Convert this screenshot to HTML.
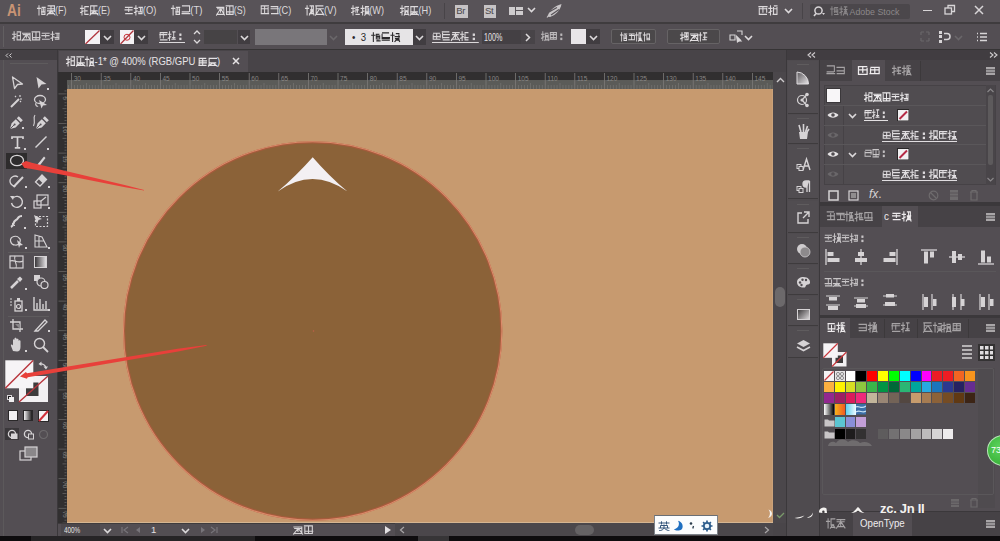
<!DOCTYPE html>
<html><head><meta charset="utf-8">
<style>
*{margin:0;padding:0;box-sizing:border-box}
html,body{width:1000px;height:541px;overflow:hidden;background:#494549;font-family:"Liberation Sans",sans-serif;color:#d8d5d7;position:relative}
.a{position:absolute;display:block}
.t{position:absolute;white-space:nowrap}
.g{display:inline-block;width:1em;height:1em;vertical-align:-0.1em;fill:currentColor;stroke:currentColor;stroke-linecap:square;overflow:visible}
</style></head><body>

<div class="a" style="left:0px;top:0px;width:1000px;height:22px;background:#585358;"></div>
<div class="a" style="left:0px;top:22px;width:1000px;height:1.5px;background:#3f3c3e;"></div>
<div class="t" style="left:6.5px;top:2px;font-size:16px;line-height:17px;color:#c99474;font-weight:bold;letter-spacing:0px;transform:scaleX(0.86);transform-origin:0 0">Ai</div>
<div class="t" data-w="31" id="t2" style="left:37px;top:4.5px;font-size:10.5px;line-height:11.5px;color:#dcd9db;transform:scaleX(0.8611);transform-origin:0 0;"><svg class="g" viewBox="0 0 10 10"><path d="M2.2 0.8 V9.4 M0.5 3.2 H3.8 M5.6 2.2 H9.1 M5.0 6.6 H8.8 M5.2 8.9 H8.4 M5.3 3.7 V8.9 M7.0 2.2 V6.9 M8.8 3.7 V8.9" stroke-width="1.1"/></svg><svg class="g" viewBox="0 0 10 10"><path d="M1.8 0.9 H8.9 M1.2 3.6 H8.9 M1.1 5.6 H8.5 M1.7 8.2 H8.2 M5.0 0.9 V8.2 M8.8 0.9 V6.2 M5.0 5.6 L0.6 9.6 M5.4 5.6 L9.5 9.5" stroke-width="1.1"/></svg>(F)</div>
<div class="t" data-w="31" id="t3" style="left:80px;top:4.5px;font-size:10.5px;line-height:11.5px;color:#dcd9db;transform:scaleX(0.8611);transform-origin:0 0;"><svg class="g" viewBox="0 0 10 10"><path d="M2.2 0.8 V9.4 M0.5 3.2 H3.8 M0.6 7.2 L3.6 5.8 M6.1 1.6 H9.3 M5.1 5.6 H7.9 M5.7 8.9 H9.0 M5.3 1.6 V8.9" stroke-width="1.1"/></svg><svg class="g" viewBox="0 0 10 10"><path d="M2.2 0.9 H8.3 M1.2 5.6 H8.5 M1.1 8.2 H9.2 M5.0 0.9 V8.2 M1.3 0.9 V8.2 M5.0 5.6 L0.6 9.6 M5.4 5.6 L9.5 9.5" stroke-width="1.1"/></svg>(E)</div>
<div class="t" data-w="34" id="t4" style="left:124px;top:4.5px;font-size:10.5px;line-height:11.5px;color:#dcd9db;transform:scaleX(0.8947);transform-origin:0 0;"><svg class="g" viewBox="0 0 10 10"><path d="M1.5 2.2 H8.7 M1.1 4.6 H8.6 M1.8 8.2 H8.8 M5.0 3.7 V6.2" stroke-width="1.1"/></svg><svg class="g" viewBox="0 0 10 10"><path d="M2.2 0.8 V9.4 M0.5 3.2 H3.8 M0.6 7.2 L3.6 5.8 M5.5 2.2 H9.1 M4.8 6.6 H8.4 M5.2 8.2 H8.1 M7.0 2.2 V6.2 M8.8 2.2 V8.2" stroke-width="1.1"/></svg>(O)</div>
<div class="t" data-w="33" id="t5" style="left:171px;top:4.5px;font-size:10.5px;line-height:11.5px;color:#dcd9db;transform:scaleX(0.9167);transform-origin:0 0;"><svg class="g" viewBox="0 0 10 10"><path d="M2.2 0.8 V9.4 M0.5 3.2 H3.8 M5.6 2.2 H9.1 M5.0 6.6 H8.8 M5.2 8.9 H8.4 M5.3 3.7 V8.9 M7.0 2.2 V6.9 M8.8 3.7 V8.9" stroke-width="1.1"/></svg><svg class="g" viewBox="0 0 10 10"><path d="M1.4 0.9 H8.6 M1.2 6.6 H7.9 M1.0 8.2 H9.1 M8.8 0.9 V6.2" stroke-width="1.1"/></svg>(T)</div>
<div class="t" data-w="30.5" id="t6" style="left:215.5px;top:4.5px;font-size:10.5px;line-height:11.5px;color:#dcd9db;transform:scaleX(0.8472);transform-origin:0 0;"><svg class="g" viewBox="0 0 10 10"><path d="M0.9 2.2 H8.1 M1.7 3.6 H8.8 M0.9 8.9 H8.5 M8.8 2.2 V8.9 M5.0 3.7 V6.9 M5.0 3.6 L0.6 9.6 M5.4 3.6 L9.5 9.5" stroke-width="1.1"/></svg><svg class="g" viewBox="0 0 10 10"><path d="M0.9 0.9 H8.1 M2.0 6.6 H9.2 M1.6 8.9 H8.7 M1.3 2.4 V8.9 M5.0 0.9 V8.9 M8.8 0.9 V8.9" stroke-width="1.1"/></svg>(S)</div>
<div class="t" data-w="32.5" id="t7" style="left:260px;top:4.5px;font-size:10.5px;line-height:11.5px;color:#dcd9db;transform:scaleX(0.8784);transform-origin:0 0;"><svg class="g" viewBox="0 0 10 10"><path d="M2.0 0.9 H9.2 M1.9 3.6 H8.6 M1.7 8.2 H9.3 M1.3 0.9 V8.2 M8.8 2.4 V8.2 M5.0 0.9 V8.2" stroke-width="1.1"/></svg><svg class="g" viewBox="0 0 10 10"><path d="M1.6 1.6 H8.7 M1.5 3.6 H9.3 M2.0 8.2 H9.2 M8.8 1.6 V8.2" stroke-width="1.1"/></svg>(C)</div>
<div class="t" data-w="32.5" id="t8" style="left:305px;top:4.5px;font-size:10.5px;line-height:11.5px;color:#dcd9db;transform:scaleX(0.9028);transform-origin:0 0;"><svg class="g" viewBox="0 0 10 10"><path d="M2.2 0.8 V9.4 M0.5 3.2 H3.8 M5.3 0.9 H8.9 M5.8 4.6 H8.0 M4.9 8.2 H9.1 M8.8 0.9 V8.2 M7.0 0.9 V8.2 M7.0 4.6 L4.6 9.6 M7.4 4.6 L9.5 9.5" stroke-width="1.1"/></svg><svg class="g" viewBox="0 0 10 10"><path d="M0.9 0.9 H8.4 M1.8 3.6 H8.9 M2.1 8.9 H8.4 M1.3 0.9 V8.9 M5.0 3.6 L0.6 9.6 M5.4 3.6 L9.5 9.5" stroke-width="1.1"/></svg>(V)</div>
<div class="t" data-w="34" id="t9" style="left:351px;top:4.5px;font-size:10.5px;line-height:11.5px;color:#dcd9db;transform:scaleX(0.8718);transform-origin:0 0;"><svg class="g" viewBox="0 0 10 10"><path d="M2.2 0.8 V9.4 M0.5 3.2 H3.8 M0.6 7.2 L3.6 5.8 M5.7 2.2 H8.2 M6.2 4.6 H8.0 M5.4 8.9 H9.1 M5.3 2.2 V6.9 M7.0 3.7 V6.9" stroke-width="1.1"/></svg><svg class="g" viewBox="0 0 10 10"><path d="M2.2 0.8 V9.4 M0.5 3.2 H3.8 M0.6 7.2 L3.6 5.8 M5.6 1.6 H8.6 M5.0 6.6 H9.2 M5.1 8.2 H9.2 M8.8 3.1 V8.2 M5.3 1.6 V8.2 M7.0 1.6 V6.2 M7.0 6.6 L4.6 9.6 M7.4 6.6 L9.5 9.5" stroke-width="1.1"/></svg>(W)</div>
<div class="t" data-w="32.5" id="t10" style="left:400px;top:4.5px;font-size:10.5px;line-height:11.5px;color:#dcd9db;transform:scaleX(0.8784);transform-origin:0 0;"><svg class="g" viewBox="0 0 10 10"><path d="M2.2 0.8 V9.4 M0.5 3.2 H3.8 M0.6 7.2 L3.6 5.8 M5.6 1.6 H9.2 M5.6 5.6 H8.5 M4.9 8.9 H9.0 M8.8 3.1 V8.9 M5.3 1.6 V8.9 M7.0 5.6 L4.6 9.6 M7.4 5.6 L9.5 9.5" stroke-width="1.1"/></svg><svg class="g" viewBox="0 0 10 10"><path d="M1.2 1.6 H8.6 M1.1 6.6 H8.3 M1.1 8.9 H8.4 M1.3 1.6 V8.9 M5.0 1.6 V8.9 M5.0 6.6 L0.6 9.6 M5.4 6.6 L9.5 9.5" stroke-width="1.1"/></svg>(H)</div>
<div class="a" style="left:444px;top:3px;width:1px;height:16px;background:#484448;"></div>
<div class="a" style="left:455px;top:5px;width:13px;height:12.5px;background:#c6c3c5;"></div>
<div class="t" style="left:456.3px;top:6.2px;font-size:9.5px;line-height:10.5px;color:#4b474b;letter-spacing:-0.3px">Br</div>
<div class="a" style="left:483.5px;top:5px;width:12.5px;height:12.5px;background:#c6c3c5;"></div>
<div class="t" style="left:485px;top:6.2px;font-size:9.5px;line-height:10.5px;color:#4b474b;letter-spacing:-0.3px">St</div>
<div class="a" style="left:509px;top:6.5px;width:6px;height:8.5px;background:#cfccce;"></div>
<div class="a" style="left:516px;top:6.5px;width:6.5px;height:3.6px;background:#cfccce;"></div>
<div class="a" style="left:516px;top:11.2px;width:6.5px;height:3.8px;background:#cfccce;"></div>
<svg class="a" style="left:527px;top:7px;" width="9" height="6" viewBox="0 0 9 6"><path d="M1 1 L4.5 4.5 L8 1" stroke="#dcd9db" stroke-width="1.6" fill="none"/></svg>
<svg class="a" style="left:546px;top:3px;" width="17" height="15" viewBox="0 0 17 15"><path d="M1.5 13.5 C3 8 8 3 15.5 1 C14.5 7 10 12 4 14 Z" fill="#c9c6c8"/><path d="M3 9 L11 4.5 M5 12 L13 6.5" stroke="#585358" stroke-width="1.2"/><path d="M1 14.5 L3 12" stroke="#c9c6c8" stroke-width="1.2"/></svg>
<div class="t" data-w="19.7" id="t13" style="left:758px;top:4.5px;font-size:10.5px;line-height:11.5px;color:#dcd9db;transform:scaleX(0.9381);transform-origin:0 0;"><svg class="g" viewBox="0 0 10 10"><path d="M0.9 1.6 H9.2 M1.6 3.6 H8.8 M1.5 8.9 H8.6 M1.3 3.1 V8.9 M8.8 3.1 V6.9 M5.0 1.6 V6.9" stroke-width="1.1"/></svg><svg class="g" viewBox="0 0 10 10"><path d="M2.2 0.8 V9.4 M0.5 3.2 H3.8 M0.6 7.2 L3.6 5.8 M6.1 0.9 H8.8 M5.8 3.6 H8.1 M4.9 8.9 H8.1 M5.3 2.4 V8.9 M8.8 2.4 V8.9" stroke-width="1.1"/></svg></div>
<svg class="a" style="left:784px;top:8px;" width="9" height="6" viewBox="0 0 9 6"><path d="M1 1 L4.5 4.5 L8 1" stroke="#dcd9db" stroke-width="1.6" fill="none"/></svg>
<div class="a" style="left:802px;top:3px;width:1px;height:16px;background:#484448;"></div>
<div class="a" style="left:810px;top:4px;width:100px;height:14.5px;background:#4b474b;border-radius:2px"></div>
<svg class="a" style="left:813px;top:5px;" width="14" height="13" viewBox="0 0 14 13"><circle cx="5.5" cy="5.5" r="3.6" stroke="#d8d5d7" stroke-width="1.5" fill="none"/><path d="M3 8.5 L1 11" stroke="#d8d5d7" stroke-width="1.6"/><path d="M9 8 L12 8 L10.5 10 Z" fill="#d8d5d7"/></svg>
<div class="t" data-w="75" id="t14" style="left:830px;top:5.5px;font-size:9.5px;line-height:10.5px;color:#8b888a;transform:scaleX(0.9259);transform-origin:0 0;font-family:"Liberation Mono",monospace"><svg class="g" viewBox="0 0 10 10"><path d="M2.2 0.8 V9.4 M0.5 3.2 H3.8 M5.2 1.6 H8.7 M4.8 5.6 H8.1 M5.2 8.9 H9.2 M5.3 1.6 V6.9 M7.0 1.6 V6.9 M8.8 3.1 V8.9" stroke-width="1.1"/></svg><svg class="g" viewBox="0 0 10 10"><path d="M2.2 0.8 V9.4 M0.5 3.2 H3.8 M0.6 7.2 L3.6 5.8 M5.8 0.9 H8.6 M5.6 3.6 H8.8 M5.3 8.2 H8.5 M7.0 0.9 V8.2 M7.0 3.6 L4.6 9.6 M7.4 3.6 L9.5 9.5" stroke-width="1.1"/></svg> Adobe Stock</div>
<div class="a" style="left:923px;top:9.5px;width:9px;height:1.8px;background:#d8d5d7;"></div>
<svg class="a" style="left:944px;top:4px;" width="12" height="12" viewBox="0 0 12 12"><rect x="1" y="4" width="6.5" height="6" stroke="#d8d5d7" stroke-width="1.3" fill="none"/><path d="M4 4 V1.5 H10.5 V7.5 H7.5" stroke="#d8d5d7" stroke-width="1.3" fill="none"/></svg>
<svg class="a" style="left:974px;top:5px;" width="10" height="10" viewBox="0 0 10 10"><path d="M1 1 L9 9 M9 1 L1 9" stroke="#d8d5d7" stroke-width="1.5"/></svg>
<div class="a" style="left:0px;top:23.5px;width:1000px;height:25.5px;background:#534e53;"></div>
<div class="a" style="left:0px;top:49px;width:1000px;height:1px;background:#363435;"></div>
<div class="a" style="left:2.5px;top:26px;width:1px;height:21px;background:#625f61;"></div>
<div class="t" data-w="48" id="t15" style="left:11.7px;top:31px;font-size:10px;line-height:11px;color:#cfccce;transform:scaleX(0.9600);transform-origin:0 0;"><svg class="g" viewBox="0 0 10 10"><path d="M2.2 0.8 V9.4 M0.5 3.2 H3.8 M0.6 7.2 L3.6 5.8 M5.5 0.9 H9.1 M5.6 4.6 H8.7 M6.1 8.9 H9.0 M5.3 2.4 V8.9 M8.8 0.9 V8.9" stroke-width="1.1"/></svg><svg class="g" viewBox="0 0 10 10"><path d="M0.9 2.2 H8.1 M1.7 3.6 H8.8 M0.9 8.9 H8.5 M8.8 2.2 V8.9 M5.0 3.7 V6.9 M5.0 3.6 L0.6 9.6 M5.4 3.6 L9.5 9.5" stroke-width="1.1"/></svg><svg class="g" viewBox="0 0 10 10"><path d="M0.9 0.9 H8.1 M2.0 6.6 H9.2 M1.6 8.9 H8.7 M1.3 2.4 V8.9 M5.0 0.9 V8.9 M8.8 0.9 V8.9" stroke-width="1.1"/></svg><svg class="g" viewBox="0 0 10 10"><path d="M1.5 2.2 H8.7 M1.1 4.6 H8.6 M1.8 8.2 H8.8 M5.0 3.7 V6.2" stroke-width="1.1"/></svg><svg class="g" viewBox="0 0 10 10"><path d="M2.2 0.8 V9.4 M0.5 3.2 H3.8 M0.6 7.2 L3.6 5.8 M5.5 2.2 H9.1 M4.8 6.6 H8.4 M5.2 8.2 H8.1 M7.0 2.2 V6.2 M8.8 2.2 V8.2" stroke-width="1.1"/></svg></div>
<svg class="a" style="left:85px;top:29.5px;" width="15" height="14.5" viewBox="0 0 15 14.5"><rect x="0" y="0" width="15" height="14.5" fill="#f4f2f4"/><path d="M0.5 14.0 L14.5 0.5" stroke="#b0343c" stroke-width="1.3"/></svg>
<div class="a" style="left:100px;top:29.5px;width:14px;height:14.5px;background:#413d41;"></div>
<svg class="a" style="left:102.5px;top:35px;" width="9" height="6" viewBox="0 0 9 6"><path d="M1 1 L4.5 4.5 L8 1" stroke="#dcd9db" stroke-width="1.6" fill="none"/></svg>
<svg class="a" style="left:120px;top:29.5px;" width="14" height="14.5" viewBox="0 0 14 14.5"><rect x="0" y="0" width="14" height="14.5" fill="#f4f2f4"/><path d="M0.5 14.0 L13.5 0.5" stroke="#b0343c" stroke-width="1.3"/><circle cx="7.0" cy="7.25" r="3" stroke="#c8363c" stroke-width="1" fill="none"/></svg>
<div class="a" style="left:134px;top:29.5px;width:14px;height:14.5px;background:#413d41;"></div>
<svg class="a" style="left:136.5px;top:35px;" width="9" height="6" viewBox="0 0 9 6"><path d="M1 1 L4.5 4.5 L8 1" stroke="#dcd9db" stroke-width="1.6" fill="none"/></svg>
<div class="t" data-w="26" id="t16" style="left:159px;top:31px;font-size:10px;line-height:11px;color:#dcd9db;transform:scaleX(0.8667);transform-origin:0 0;border-bottom:1px solid currentColor;line-height:11px"><svg class="g" viewBox="0 0 10 10"><path d="M1.7 1.6 H9.3 M0.9 3.6 H8.8 M1.6 8.9 H9.3 M5.0 3.1 V6.9 M1.3 1.6 V6.9" stroke-width="1.1"/></svg><svg class="g" viewBox="0 0 10 10"><path d="M2.2 0.8 V9.4 M0.5 3.2 H3.8 M0.6 7.2 L3.6 5.8 M5.9 0.9 H8.5 M5.7 6.6 H8.4 M4.8 8.2 H8.8 M7.0 0.9 V8.2" stroke-width="1.1"/></svg><svg class="g" viewBox="0 0 10 10"><rect x="4" y="3" width="1.4" height="1.4"/><rect x="4" y="7.2" width="1.4" height="1.4"/></svg></div>
<svg class="a" style="left:193px;top:29px;" width="8" height="16" viewBox="0 0 8 16"><path d="M1 5 L4 2 L7 5 M1 11 L4 14 L7 11" stroke="#dcd9db" stroke-width="1.3" fill="none"/></svg>
<div class="a" style="left:204px;top:29.5px;width:33px;height:14.5px;background:#464345;"></div>
<div class="a" style="left:238px;top:29.5px;width:12px;height:14.5px;background:#413d41;"></div>
<svg class="a" style="left:239.5px;top:35px;" width="9" height="6" viewBox="0 0 9 6"><path d="M1 1 L4.5 4.5 L8 1" stroke="#dcd9db" stroke-width="1.6" fill="none"/></svg>
<div class="a" style="left:255px;top:28.5px;width:72px;height:16.5px;background:#79767a;"></div>
<svg class="a" style="left:329px;top:35px;" width="9" height="6" viewBox="0 0 9 6"><path d="M1 1 L4.5 4.5 L8 1" stroke="#6a676a" stroke-width="1.6" fill="none"/></svg>
<div class="a" style="left:345px;top:28.5px;width:67.5px;height:16.5px;background:#e6e4e6;"></div>
<div class="t" data-w="50" id="t17" style="left:352px;top:31.5px;font-size:10px;line-height:11px;color:#2a282a;transform:scaleX(0.9615);transform-origin:0 0;">•&nbsp;&nbsp;3&nbsp;&nbsp;<svg class="g" viewBox="0 0 10 10"><path d="M2.2 0.8 V9.4 M0.5 3.2 H3.8 M5.5 2.2 H8.0 M6.2 4.6 H8.5 M5.8 8.9 H9.2 M5.3 2.2 V6.9 M7.0 2.2 V8.9 M8.8 3.7 V6.9" stroke-width="1.1"/></svg><svg class="g" viewBox="0 0 10 10"><path d="M1.8 0.9 H8.0 M1.3 5.6 H9.0 M1.3 6.6 H8.8 M1.4 8.2 H8.8 M1.3 2.4 V6.2" stroke-width="1.1"/></svg><svg class="g" viewBox="0 0 10 10"><path d="M2.2 0.8 V9.4 M0.5 3.2 H3.8 M6.1 1.6 H8.8 M4.9 4.6 H9.3 M5.2 6.6 H8.8 M5.6 8.2 H9.1 M8.8 3.1 V8.2 M7.0 6.6 L4.6 9.6 M7.4 6.6 L9.5 9.5" stroke-width="1.1"/></svg></div>
<div class="a" style="left:412.5px;top:28.5px;width:13px;height:16.5px;background:#413d41;"></div>
<svg class="a" style="left:414.5px;top:35px;" width="9" height="6" viewBox="0 0 9 6"><path d="M1 1 L4.5 4.5 L8 1" stroke="#dcd9db" stroke-width="1.6" fill="none"/></svg>
<div class="t" data-w="46.8" id="t18" style="left:432px;top:31px;font-size:10px;line-height:11px;color:#dcd9db;transform:scaleX(0.9360);transform-origin:0 0;border-bottom:1px solid currentColor;line-height:11px"><svg class="g" viewBox="0 0 10 10"><path d="M1.6 2.2 H8.1 M1.7 5.6 H8.3 M1.9 8.2 H8.5 M8.8 3.7 V6.2 M5.0 2.2 V8.2 M1.3 3.7 V8.2" stroke-width="1.1"/></svg><svg class="g" viewBox="0 0 10 10"><path d="M1.0 0.9 H8.0 M2.1 3.6 H8.6 M1.9 6.6 H8.0 M2.0 8.9 H8.4 M1.3 2.4 V6.9" stroke-width="1.1"/></svg><svg class="g" viewBox="0 0 10 10"><path d="M2.1 1.6 H9.1 M1.8 3.6 H8.0 M0.9 8.2 H9.1 M5.0 1.6 V8.2 M5.0 3.6 L0.6 9.6 M5.4 3.6 L9.5 9.5" stroke-width="1.1"/></svg><svg class="g" viewBox="0 0 10 10"><path d="M2.2 0.8 V9.4 M0.5 3.2 H3.8 M0.6 7.2 L3.6 5.8 M5.3 1.6 H8.4 M4.9 6.6 H8.5 M6.2 8.9 H8.4 M5.3 3.1 V8.9" stroke-width="1.1"/></svg><svg class="g" viewBox="0 0 10 10"><rect x="4" y="3" width="1.4" height="1.4"/><rect x="4" y="7.2" width="1.4" height="1.4"/></svg></div>
<div class="a" style="left:481.5px;top:29.5px;width:39.5px;height:14.5px;background:#444044;"></div>
<div class="t" data-w="19.4" id="t19" style="left:484px;top:31.5px;font-size:10px;line-height:11px;color:#e6e3e5;transform:scaleX(0.7185);transform-origin:0 0;">100%</div>
<div class="a" style="left:521px;top:29.5px;width:14px;height:14.5px;background:#484448;"></div>
<svg class="a" style="left:525px;top:33px;" width="6" height="9" viewBox="0 0 6 9"><path d="M1 1 L4.5 4.5 L1 8" stroke="#dcd9db" stroke-width="1.5" fill="none"/></svg>
<div class="t" data-w="24.7" id="t20" style="left:541px;top:31px;font-size:10px;line-height:11px;color:#bdbabc;transform:scaleX(0.8233);transform-origin:0 0;"><svg class="g" viewBox="0 0 10 10"><path d="M2.2 0.8 V9.4 M0.5 3.2 H3.8 M0.6 7.2 L3.6 5.8 M5.2 2.2 H8.4 M6.2 4.6 H8.6 M5.6 8.9 H8.4 M8.8 3.7 V8.9 M5.3 3.7 V6.9 M7.0 4.6 L4.6 9.6 M7.4 4.6 L9.5 9.5" stroke-width="1.1"/></svg><svg class="g" viewBox="0 0 10 10"><path d="M1.9 1.6 H8.0 M1.6 3.6 H8.5 M1.2 6.6 H8.4 M0.8 8.2 H8.3 M8.8 1.6 V8.2 M5.0 1.6 V8.2 M1.3 1.6 V8.2" stroke-width="1.1"/></svg><svg class="g" viewBox="0 0 10 10"><rect x="4" y="3" width="1.4" height="1.4"/><rect x="4" y="7.2" width="1.4" height="1.4"/></svg></div>
<div class="a" style="left:571px;top:29px;width:15px;height:15px;background:#e8e5e8;"></div>
<div class="a" style="left:586px;top:29px;width:14px;height:15px;background:#413d41;"></div>
<svg class="a" style="left:588.5px;top:35px;" width="9" height="6" viewBox="0 0 9 6"><path d="M1 1 L4.5 4.5 L8 1" stroke="#dcd9db" stroke-width="1.6" fill="none"/></svg>
<div class="a" style="left:611px;top:29px;width:45px;height:15px;background:#4b484a;border:1px solid #666365;border-radius:2px"></div>
<div class="t" data-w="30" id="t21" style="left:620px;top:31.5px;font-size:9.5px;line-height:10.5px;color:#e3e0e2;transform:scaleX(0.7895);transform-origin:0 0;"><svg class="g" viewBox="0 0 10 10"><path d="M2.2 0.8 V9.4 M0.5 3.2 H3.8 M5.6 2.2 H9.1 M5.0 6.6 H8.8 M5.2 8.9 H8.4 M5.3 3.7 V8.9 M7.0 2.2 V6.9 M8.8 3.7 V8.9" stroke-width="1.1"/></svg><svg class="g" viewBox="0 0 10 10"><path d="M1.7 2.2 H8.5 M2.1 3.6 H8.3 M1.0 8.2 H8.1 M8.8 3.7 V8.2 M5.0 2.2 V8.2" stroke-width="1.1"/></svg><svg class="g" viewBox="0 0 10 10"><path d="M2.2 0.8 V9.4 M0.5 3.2 H3.8 M5.4 0.9 H8.3 M5.1 6.6 H8.1 M4.8 8.9 H9.2 M5.3 0.9 V8.9 M7.0 0.9 V8.9 M7.0 6.6 L4.6 9.6 M7.4 6.6 L9.5 9.5" stroke-width="1.1"/></svg><svg class="g" viewBox="0 0 10 10"><path d="M2.2 0.8 V9.4 M0.5 3.2 H3.8 M6.2 2.2 H8.9 M5.5 6.6 H8.8 M5.3 8.2 H9.1 M8.8 2.2 V8.2 M5.3 2.2 V8.2" stroke-width="1.1"/></svg></div>
<div class="a" style="left:667px;top:29px;width:52.5px;height:15px;background:#4b484a;border:1px solid #666365;border-radius:2px"></div>
<div class="t" data-w="27.5" id="t22" style="left:680.3px;top:31.5px;font-size:9.5px;line-height:10.5px;color:#e3e0e2;transform:scaleX(0.9649);transform-origin:0 0;"><svg class="g" viewBox="0 0 10 10"><path d="M2.2 0.8 V9.4 M0.5 3.2 H3.8 M0.6 7.2 L3.6 5.8 M5.0 0.9 H9.0 M5.0 4.6 H8.7 M5.5 8.2 H8.7 M5.3 2.4 V6.2 M7.0 0.9 V6.2 M8.8 0.9 V8.2" stroke-width="1.1"/></svg><svg class="g" viewBox="0 0 10 10"><path d="M0.9 2.2 H8.1 M1.7 3.6 H8.8 M0.9 8.9 H8.5 M8.8 2.2 V8.9 M5.0 3.7 V6.9 M5.0 3.6 L0.6 9.6 M5.4 3.6 L9.5 9.5" stroke-width="1.1"/></svg><svg class="g" viewBox="0 0 10 10"><path d="M2.2 0.8 V9.4 M0.5 3.2 H3.8 M5.6 0.9 H9.1 M5.7 5.6 H9.2 M4.8 8.2 H8.7 M7.0 0.9 V8.2" stroke-width="1.1"/></svg></div>
<svg class="a" style="left:729px;top:29px;" width="14" height="16" viewBox="0 0 14 16"><path d="M1 6 H6 V11 H1 Z M8 2 H13 V6 M8 8 L12 12 L9 12 Z" stroke="#d8d5d7" stroke-width="1.1" fill="none"/><path d="M7 6 L12 11 L8 14 Z" fill="#d8d5d7"/></svg>
<svg class="a" style="left:744px;top:35px;" width="9" height="6" viewBox="0 0 9 6"><path d="M1 1 L4.5 4.5 L8 1" stroke="#dcd9db" stroke-width="1.6" fill="none"/></svg>
<svg class="a" style="left:920px;top:31px;" width="10" height="11" viewBox="0 0 10 11"><path d="M1 1 H4 M6 1 H9 M1 10 H4 M6 10 H9 M1 1 V4 M9 1 V4 M1 7 V10 M9 7 V10" stroke="#6a676a" stroke-width="1.2" fill="none"/></svg>
<div class="a" style="left:939px;top:30.5px;width:3px;height:3px;background:#d8d5d7;"></div>
<div class="a" style="left:939px;top:35px;width:3px;height:3px;background:#d8d5d7;"></div>
<div class="a" style="left:939px;top:39.5px;width:3px;height:3px;background:#d8d5d7;"></div>
<svg class="a" style="left:943px;top:31px;" width="9" height="11" viewBox="0 0 9 11"><path d="M1 2.5 H4 A3 3 0 0 1 4 8.5 H1" stroke="#d8d5d7" stroke-width="1.5" fill="none"/></svg>
<svg class="a" style="left:954px;top:35px;" width="9" height="6" viewBox="0 0 9 6"><path d="M1 1 L4.5 4.5 L8 1" stroke="#6a676a" stroke-width="1.6" fill="none"/></svg>
<svg class="a" style="left:976px;top:32px;" width="12" height="10" viewBox="0 0 12 10"><path d="M1 1.5 H2 M4 1.5 H11 M1 5 H2 M4 5 H11 M1 8.5 H2 M4 8.5 H11" stroke="#d8d5d7" stroke-width="1.4"/></svg>
<div class="a" style="left:0px;top:50px;width:57px;height:486px;background:#534e53;"></div>
<div class="a" style="left:0px;top:50px;width:57px;height:10px;background:#444044;"></div>
<div class="a" style="left:57px;top:50px;width:1px;height:486px;background:#3b383b;"></div>
<div class="a" style="left:3px;top:60px;width:1px;height:476px;background:#5c595b;"></div>
<svg class="a" style="left:5px;top:53px;" width="7" height="5" viewBox="0 0 7 5"><path d="M3 0.5 L1 2.5 L3 4.5 M6.5 0.5 L4.5 2.5 L6.5 4.5" stroke="#cfccce" stroke-width="1" fill="none"/></svg>
<div class="a" style="left:10px;top:63px;width:38px;height:1px;background:#5e5b5d;"></div>
<svg class="a" style="left:11px;top:76px;" width="13" height="14" viewBox="0 0 13 14"><path d="M1.5 1 L11.5 8 L6.5 8.5 L3.5 12.5 Z" stroke="#d6d3d5" stroke-width="1.3" fill="none" stroke-linejoin="round"/></svg>
<svg class="a" style="left:35px;top:76px;" width="13" height="14" viewBox="0 0 13 14"><path d="M1.5 1 L11.5 8 L6.5 8.5 L3.5 12.5 Z" fill="#d6d3d5"/></svg>
<div class="a" style="left:47px;top:88px;width:2px;height:2px;background:#d6d3d5;"></div>
<svg class="a" style="left:9px;top:94px;" width="15" height="14" viewBox="0 0 15 14"><path d="M2 13 L10 5" stroke="#d6d3d5" stroke-width="2"/><path d="M6 2 L7 3 M11 1 V3 M13 5 H11 M12 8 L11 7" stroke="#d6d3d5" stroke-width="1.2"/></svg>
<svg class="a" style="left:33px;top:94px;" width="16" height="15" viewBox="0 0 16 15"><ellipse cx="7" cy="5.5" rx="5.5" ry="4" stroke="#d6d3d5" stroke-width="1.3" fill="none"/><path d="M6 6 L14 11 L10 11.5 L8.5 14.5 Z" fill="#d6d3d5"/><path d="M3 9 C2 11 4 13 5 12" stroke="#d6d3d5" stroke-width="1.2" fill="none"/></svg>
<svg class="a" style="left:9px;top:115px;" width="15" height="15" viewBox="0 0 15 15"><path d="M1 14 L2.6 8.3 L6.8 4.2 L10.8 8.2 L6.7 12.4 Z" fill="#d6d3d5"/><path d="M7.8 3.2 L9.8 1.2 L13.8 5.2 L11.8 7.2 Z" fill="#d6d3d5"/><path d="M1.2 13.8 L5 10" stroke="#534e53" stroke-width="0.9"/><circle cx="5.6" cy="9.4" r="1" fill="#534e53"/></svg>
<div class="a" style="left:22px;top:127px;width:2px;height:2px;background:#d6d3d5;"></div>
<svg class="a" style="left:32px;top:114px;" width="17" height="16" viewBox="0 0 17 16"><path d="M4 15 L5.6 9.3 L9.8 5.2 L13.8 9.2 L9.7 13.4 Z" fill="#d6d3d5"/><path d="M10.8 4.2 L12.8 2.2 L16.8 6.2 L14.8 8.2 Z" fill="#d6d3d5"/><path d="M4.2 14.8 L8 11" stroke="#534e53" stroke-width="0.9"/><circle cx="8.6" cy="10.4" r="1" fill="#534e53"/><path d="M3 1 C0.5 4 4 7 1.5 12" stroke="#d6d3d5" stroke-width="1.1" fill="none"/></svg>
<svg class="a" style="left:10.5px;top:136px;" width="13" height="13" viewBox="0 0 13 13"><path d="M1 3 V1 H12 V3 M6.5 1 V11.8 M3.8 11.8 H9.2" stroke="#d6d3d5" stroke-width="1.7" fill="none"/></svg>
<div class="a" style="left:24px;top:148px;width:2px;height:2px;background:#d6d3d5;"></div>
<svg class="a" style="left:34px;top:135px;" width="14" height="14" viewBox="0 0 14 14"><path d="M1.5 12.5 L12.5 1.5" stroke="#d6d3d5" stroke-width="1.4"/></svg>
<div class="a" style="left:47px;top:148px;width:2px;height:2px;background:#d6d3d5;"></div>
<div class="a" style="left:6px;top:152.7px;width:21px;height:16px;background:#2e2c2d;"></div>
<svg class="a" style="left:9px;top:154px;" width="16" height="13" viewBox="0 0 16 13"><ellipse cx="8" cy="6.5" rx="6.5" ry="5.2" stroke="#d6d3d5" stroke-width="1.3" fill="none"/></svg>
<svg class="a" style="left:34px;top:155px;" width="13" height="14" viewBox="0 0 13 14"><path d="M3 10 L10 1.5 L11.5 3 L5 11.5 Z" fill="#d6d3d5"/><path d="M2 13 L4 10.5" stroke="#d6d3d5" stroke-width="2"/></svg>
<div class="a" style="left:47px;top:168px;width:2px;height:2px;background:#d6d3d5;"></div>
<svg class="a" style="left:9px;top:173px;" width="16" height="15" viewBox="0 0 16 15"><path d="M6.5 13 A5 5 0 1 1 9 4" stroke="#d6d3d5" stroke-width="1.3" fill="none"/><path d="M4.5 14 L14 4" stroke="#d6d3d5" stroke-width="2"/></svg>
<div class="a" style="left:25px;top:186px;width:2px;height:2px;background:#d6d3d5;"></div>
<svg class="a" style="left:34px;top:173px;" width="14" height="14" viewBox="0 0 14 14"><path d="M1.5 9 L8 2 L12.5 6.5 L6 13 Z" stroke="#d6d3d5" stroke-width="1.3" fill="none"/><path d="M4.5 6 L9 10.5 L12.5 6.5 L8 2 Z" fill="#d6d3d5"/></svg>
<div class="a" style="left:48px;top:186px;width:2px;height:2px;background:#d6d3d5;"></div>
<svg class="a" style="left:9px;top:194px;" width="15" height="15" viewBox="0 0 15 15"><path d="M4 4 A5.5 5.5 0 1 1 2.5 9" stroke="#d6d3d5" stroke-width="1.4" fill="none"/><path d="M1 2 L5 2 L4 6 Z" fill="#d6d3d5"/></svg>
<div class="a" style="left:24px;top:207px;width:2px;height:2px;background:#d6d3d5;"></div>
<svg class="a" style="left:33px;top:194px;" width="16" height="15" viewBox="0 0 16 15"><rect x="1" y="7" width="7" height="7" stroke="#d6d3d5" stroke-width="1.2" fill="none"/><rect x="4" y="1" width="11" height="10" stroke="#d6d3d5" stroke-width="1.2" fill="none"/><path d="M8 7 L13 3" stroke="#d6d3d5" stroke-width="1.2"/></svg>
<div class="a" style="left:48px;top:207px;width:2px;height:2px;background:#d6d3d5;"></div>
<svg class="a" style="left:9px;top:214px;" width="16" height="15" viewBox="0 0 16 15"><path d="M2 13 C6 11 3 8 7 6 C10 5 8 2 13 2" stroke="#d6d3d5" stroke-width="2.2" fill="none"/><path d="M3 9 L6 12" stroke="#d6d3d5" stroke-width="1"/></svg>
<div class="a" style="left:24px;top:227px;width:2px;height:2px;background:#d6d3d5;"></div>
<svg class="a" style="left:33px;top:214px;" width="16" height="15" viewBox="0 0 16 15"><rect x="2.5" y="2.5" width="12" height="10" stroke="#d6d3d5" stroke-width="1.2" fill="none" stroke-dasharray="2 1.5"/><path d="M1 1 L9 5 L5.5 6 L4 10 Z" fill="#d6d3d5"/></svg>
<svg class="a" style="left:9px;top:234px;" width="16" height="15" viewBox="0 0 16 15"><path d="M1.5 7 C1 2 8 1 10 4 C13 6 10 12 6 11 C3 11 2 9 1.5 7 Z" stroke="#d6d3d5" stroke-width="1.2" fill="none"/><path d="M8 6 L14 11 L11 11.5 L10 14 Z" fill="#d6d3d5"/></svg>
<div class="a" style="left:25px;top:247px;width:2px;height:2px;background:#d6d3d5;"></div>
<svg class="a" style="left:33px;top:233px;" width="16" height="16" viewBox="0 0 16 16"><path d="M2 2 L9 4 L14 14 L2 14 Z M2 8 H11 M6 3 L6 14" stroke="#d6d3d5" stroke-width="1.1" fill="none"/></svg>
<div class="a" style="left:48px;top:247px;width:2px;height:2px;background:#d6d3d5;"></div>
<div class="a" style="left:8px;top:252px;width:41px;height:1px;background:#5e5b5d;"></div>
<svg class="a" style="left:9px;top:255px;" width="15" height="14" viewBox="0 0 15 14"><rect x="1" y="1" width="13" height="12" stroke="#d6d3d5" stroke-width="1.2" fill="none"/><path d="M1 6 C5 4 9 9 14 6 M6 1 C4 5 9 9 7 13" stroke="#d6d3d5" stroke-width="1.1" fill="none"/></svg>
<div class="a" style="left:34px;top:256px;width:13px;height:12px;border:1px solid #d6d3d5;background:linear-gradient(90deg,#3b383b,#e0dde0)"></div>
<svg class="a" style="left:9px;top:275px;" width="15" height="15" viewBox="0 0 15 15"><path d="M2 13 L9 6" stroke="#d6d3d5" stroke-width="2.5"/><path d="M8 4 L11 1.5 L13.5 4 L11 7 Z" fill="#d6d3d5"/></svg>
<div class="a" style="left:25px;top:288px;width:2px;height:2px;background:#d6d3d5;"></div>
<svg class="a" style="left:33px;top:274px;" width="16" height="15" viewBox="0 0 16 15"><rect x="1" y="1" width="6" height="6" fill="#d6d3d5"/><circle cx="8" cy="8" r="4" stroke="#d6d3d5" stroke-width="1.2" fill="#534e53"/><circle cx="11.5" cy="11" r="3.5" stroke="#d6d3d5" stroke-width="1.2" fill="#534e53"/></svg>
<svg class="a" style="left:9px;top:297px;" width="16" height="15" viewBox="0 0 16 15"><rect x="6" y="4" width="7" height="10" stroke="#d6d3d5" stroke-width="1.3" fill="none"/><circle cx="9.5" cy="9.5" r="2" stroke="#d6d3d5" stroke-width="1.2" fill="none"/><rect x="8" y="1" width="3" height="3" fill="#d6d3d5"/><path d="M1 2 H3 M1 5 H3 M1 8 H3" stroke="#d6d3d5" stroke-width="1.2"/></svg>
<div class="a" style="left:25px;top:309px;width:2px;height:2px;background:#d6d3d5;"></div>
<svg class="a" style="left:33px;top:296px;" width="16" height="15" viewBox="0 0 16 15"><path d="M1 1 V14 H15 M4 13 V7 M7 13 V3 M10 13 V8 M13 13 V5" stroke="#d6d3d5" stroke-width="1.4" fill="none"/></svg>
<div class="a" style="left:48px;top:309px;width:2px;height:2px;background:#d6d3d5;"></div>
<div class="a" style="left:8px;top:316px;width:41px;height:1px;background:#5e5b5d;"></div>
<svg class="a" style="left:9px;top:318px;" width="16" height="15" viewBox="0 0 16 15"><path d="M4 1 V11 H14 M1 4 H11 V14" stroke="#d6d3d5" stroke-width="1.3" fill="none"/><path d="M6 6 L11 6 L11 11 Z" fill="#8a878a"/></svg>
<svg class="a" style="left:33px;top:318px;" width="16" height="15" viewBox="0 0 16 15"><path d="M2 13 L12 2 L14 4 L5 13 Z" stroke="#d6d3d5" stroke-width="1.3" fill="none"/></svg>
<div class="a" style="left:48px;top:330px;width:2px;height:2px;background:#d6d3d5;"></div>
<svg class="a" style="left:9px;top:337px;" width="16" height="16" viewBox="0 0 16 16"><path d="M4 14 L2 9 C1.5 7.5 3 7 4 8.5 V3 C4 2 5.5 2 5.5 3 V7 V1.5 C5.5 0.5 7.5 0.5 7.5 1.5 V7 V2.5 C7.5 1.5 9.5 1.5 9.5 2.5 V7.5 V4 C9.5 3 11.5 3 11.5 4 V10 C11.5 13 10 14.5 8 14.5 Z" fill="#d6d3d5"/></svg>
<div class="a" style="left:25px;top:350px;width:2px;height:2px;background:#d6d3d5;"></div>
<svg class="a" style="left:33px;top:337px;" width="16" height="16" viewBox="0 0 16 16"><circle cx="6.5" cy="6.5" r="5" stroke="#d6d3d5" stroke-width="1.4" fill="none"/><path d="M10 10 L15 15" stroke="#d6d3d5" stroke-width="1.8"/></svg>
<svg class="a" style="left:5px;top:360px" width="45" height="44" viewBox="0 0 45 44">
<rect x="14" y="16" width="29" height="26" fill="#f2f0f2"/>
<rect x="21" y="22.5" width="12.5" height="13.5" fill="#3d3b3c"/>
<path d="M14 42 L43 16" stroke="#b8343c" stroke-width="1.4"/>
<rect x="0.3" y="0.3" width="28" height="28" fill="#f6f4f6"/>
<path d="M0.3 28.3 L28.3 0.3" stroke="#b8343c" stroke-width="1.4"/>
</svg>
<svg class="a" style="left:38px;top:360px;" width="11" height="10" viewBox="0 0 11 10"><path d="M2 4 A5 5 0 0 1 8 8" stroke="#d6d3d5" stroke-width="1.2" fill="none"/><path d="M0.5 4 L3.5 1.5 L3.5 6 Z M8 9.5 L5.5 6.5 L10 6.5 Z" fill="#d6d3d5"/></svg>
<div class="a" style="left:6.5px;top:395px;width:5px;height:5px;background:#1e1c1d;border:1px solid #d6d3d5"></div>
<div class="a" style="left:9px;top:397px;width:5px;height:5px;background:#f0eef0;"></div>
<div class="a" style="left:7.5px;top:410px;width:10.5px;height:11px;background:#f2f0f2;border:1px solid #2a2829"></div>
<div class="a" style="left:22.5px;top:410px;width:10.5px;height:11px;border:1px solid #2a2829;background:linear-gradient(90deg,#f4f2f4,#1c1a1b)"></div>
<svg class="a" style="left:38px;top:409.5px;" width="11" height="12" viewBox="0 0 11 12"><rect x="0.5" y="0.5" width="10" height="11" fill="#f4f2f4" stroke="#2a2829"/><path d="M1 11 L10 1" stroke="#d0303a" stroke-width="2"/></svg>
<div class="a" style="left:5.3px;top:428px;width:14px;height:12px;background:#3b383b;"></div>
<svg class="a" style="left:7px;top:429px;" width="12" height="11" viewBox="0 0 12 11"><circle cx="5" cy="5" r="3.6" stroke="#d6d3d5" stroke-width="1.3" fill="none"/><rect x="4" y="4.5" width="6.5" height="5.5" fill="#d6d3d5"/></svg>
<svg class="a" style="left:23px;top:429px;" width="12" height="11" viewBox="0 0 12 11"><circle cx="5" cy="5" r="3.6" stroke="#d6d3d5" stroke-width="1.3" fill="none"/><rect x="5.5" y="5" width="5" height="5" stroke="#d6d3d5" stroke-width="1" fill="#534e53"/></svg>
<svg class="a" style="left:38px;top:429px;" width="11" height="11" viewBox="0 0 11 11"><circle cx="5.5" cy="5.5" r="4" stroke="#6e6b6d" stroke-width="1.2" fill="none"/></svg>
<svg class="a" style="left:19px;top:446px;" width="19" height="16" viewBox="0 0 19 16"><rect x="1" y="5" width="11" height="9" stroke="#d6d3d5" stroke-width="1.2" fill="none"/><rect x="6" y="1" width="12" height="10" stroke="#d6d3d5" stroke-width="1.2" fill="#8a878a"/></svg>
<div class="a" style="left:58px;top:50px;width:729px;height:22px;background:#484448;"></div>
<div class="a" style="left:59px;top:51px;width:189px;height:21px;background:#534e53;"></div>
<div class="t" data-w="159.5" id="t23" style="left:65.5px;top:56px;font-size:10.5px;line-height:11.5px;color:#e6e3e5;transform:scaleX(0.9037);transform-origin:0 0;"><svg class="g" viewBox="0 0 10 10"><path d="M2.2 0.8 V9.4 M0.5 3.2 H3.8 M0.6 7.2 L3.6 5.8 M5.5 0.9 H9.1 M5.6 4.6 H8.7 M6.1 8.9 H9.0 M5.3 2.4 V8.9 M8.8 0.9 V8.9" stroke-width="1.1"/></svg><svg class="g" viewBox="0 0 10 10"><path d="M1.0 0.9 H8.2 M2.1 6.6 H8.8 M0.8 8.9 H8.5 M5.0 2.4 V8.9 M1.3 2.4 V8.9 M5.0 6.6 L0.6 9.6 M5.4 6.6 L9.5 9.5" stroke-width="1.1"/></svg><svg class="g" viewBox="0 0 10 10"><path d="M2.2 0.8 V9.4 M0.5 3.2 H3.8 M6.0 2.2 H8.6 M5.6 5.6 H8.3 M4.8 8.9 H8.1 M8.8 3.7 V6.9 M5.3 3.7 V8.9 M7.0 5.6 L4.6 9.6 M7.4 5.6 L9.5 9.5" stroke-width="1.1"/></svg>-1* @ 400% (RGB/GPU <svg class="g" viewBox="0 0 10 10"><path d="M1.3 2.2 H8.2 M2.0 4.6 H9.0 M1.2 6.6 H8.9 M1.0 8.9 H8.5 M1.3 2.2 V8.9 M5.0 2.2 V8.9" stroke-width="1.1"/></svg><svg class="g" viewBox="0 0 10 10"><path d="M1.6 2.2 H9.2 M2.0 6.6 H8.3 M0.8 8.9 H8.3 M1.3 2.2 V8.9 M5.0 6.6 L0.6 9.6 M5.4 6.6 L9.5 9.5" stroke-width="1.1"/></svg>)</div>
<svg class="a" style="left:232px;top:57px;" width="8" height="8" viewBox="0 0 8 8"><path d="M1 1 L7 7 M7 1 L1 7" stroke="#e6e3e5" stroke-width="1.5"/></svg>
<div class="a" style="left:58px;top:72px;width:715px;height:17px;background:#312f30;"></div>
<div class="a" style="left:66px;top:80px;width:707px;height:8.5px;background:#5b5b58;"></div>
<svg class="a" style="left:66px;top:72px;" width="707" height="17" viewBox="0 0 707 17"><rect x="2.24" y="13" width="0.8" height="4" fill="#737270"/><rect x="5.20" y="1" width="0.8" height="16" fill="#7c7a78"/><text x="7.70" y="9" font-size="6.5" fill="#888684" font-family="Liberation Sans">30</text><rect x="8.16" y="13" width="0.8" height="4" fill="#737270"/><rect x="11.12" y="13" width="0.8" height="4" fill="#737270"/><rect x="14.08" y="13" width="0.8" height="4" fill="#737270"/><rect x="17.04" y="13" width="0.8" height="4" fill="#737270"/><rect x="20.00" y="11" width="0.8" height="6" fill="#737270"/><rect x="22.96" y="13" width="0.8" height="4" fill="#737270"/><rect x="25.92" y="13" width="0.8" height="4" fill="#737270"/><rect x="28.88" y="13" width="0.8" height="4" fill="#737270"/><rect x="31.84" y="13" width="0.8" height="4" fill="#737270"/><rect x="34.80" y="1" width="0.8" height="16" fill="#7c7a78"/><text x="37.30" y="9" font-size="6.5" fill="#888684" font-family="Liberation Sans">35</text><rect x="37.76" y="13" width="0.8" height="4" fill="#737270"/><rect x="40.72" y="13" width="0.8" height="4" fill="#737270"/><rect x="43.68" y="13" width="0.8" height="4" fill="#737270"/><rect x="46.64" y="13" width="0.8" height="4" fill="#737270"/><rect x="49.60" y="11" width="0.8" height="6" fill="#737270"/><rect x="52.56" y="13" width="0.8" height="4" fill="#737270"/><rect x="55.52" y="13" width="0.8" height="4" fill="#737270"/><rect x="58.48" y="13" width="0.8" height="4" fill="#737270"/><rect x="61.44" y="13" width="0.8" height="4" fill="#737270"/><rect x="64.40" y="1" width="0.8" height="16" fill="#7c7a78"/><text x="66.90" y="9" font-size="6.5" fill="#888684" font-family="Liberation Sans">40</text><rect x="67.36" y="13" width="0.8" height="4" fill="#737270"/><rect x="70.32" y="13" width="0.8" height="4" fill="#737270"/><rect x="73.28" y="13" width="0.8" height="4" fill="#737270"/><rect x="76.24" y="13" width="0.8" height="4" fill="#737270"/><rect x="79.20" y="11" width="0.8" height="6" fill="#737270"/><rect x="82.16" y="13" width="0.8" height="4" fill="#737270"/><rect x="85.12" y="13" width="0.8" height="4" fill="#737270"/><rect x="88.08" y="13" width="0.8" height="4" fill="#737270"/><rect x="91.04" y="13" width="0.8" height="4" fill="#737270"/><rect x="94.00" y="1" width="0.8" height="16" fill="#7c7a78"/><text x="96.50" y="9" font-size="6.5" fill="#888684" font-family="Liberation Sans">45</text><rect x="96.96" y="13" width="0.8" height="4" fill="#737270"/><rect x="99.92" y="13" width="0.8" height="4" fill="#737270"/><rect x="102.88" y="13" width="0.8" height="4" fill="#737270"/><rect x="105.84" y="13" width="0.8" height="4" fill="#737270"/><rect x="108.80" y="11" width="0.8" height="6" fill="#737270"/><rect x="111.76" y="13" width="0.8" height="4" fill="#737270"/><rect x="114.72" y="13" width="0.8" height="4" fill="#737270"/><rect x="117.68" y="13" width="0.8" height="4" fill="#737270"/><rect x="120.64" y="13" width="0.8" height="4" fill="#737270"/><rect x="123.60" y="1" width="0.8" height="16" fill="#7c7a78"/><text x="126.10" y="9" font-size="6.5" fill="#888684" font-family="Liberation Sans">50</text><rect x="126.56" y="13" width="0.8" height="4" fill="#737270"/><rect x="129.52" y="13" width="0.8" height="4" fill="#737270"/><rect x="132.48" y="13" width="0.8" height="4" fill="#737270"/><rect x="135.44" y="13" width="0.8" height="4" fill="#737270"/><rect x="138.40" y="11" width="0.8" height="6" fill="#737270"/><rect x="141.36" y="13" width="0.8" height="4" fill="#737270"/><rect x="144.32" y="13" width="0.8" height="4" fill="#737270"/><rect x="147.28" y="13" width="0.8" height="4" fill="#737270"/><rect x="150.24" y="13" width="0.8" height="4" fill="#737270"/><rect x="153.20" y="1" width="0.8" height="16" fill="#7c7a78"/><text x="155.70" y="9" font-size="6.5" fill="#888684" font-family="Liberation Sans">55</text><rect x="156.16" y="13" width="0.8" height="4" fill="#737270"/><rect x="159.12" y="13" width="0.8" height="4" fill="#737270"/><rect x="162.08" y="13" width="0.8" height="4" fill="#737270"/><rect x="165.04" y="13" width="0.8" height="4" fill="#737270"/><rect x="168.00" y="11" width="0.8" height="6" fill="#737270"/><rect x="170.96" y="13" width="0.8" height="4" fill="#737270"/><rect x="173.92" y="13" width="0.8" height="4" fill="#737270"/><rect x="176.88" y="13" width="0.8" height="4" fill="#737270"/><rect x="179.84" y="13" width="0.8" height="4" fill="#737270"/><rect x="182.80" y="1" width="0.8" height="16" fill="#7c7a78"/><text x="185.30" y="9" font-size="6.5" fill="#888684" font-family="Liberation Sans">60</text><rect x="185.76" y="13" width="0.8" height="4" fill="#737270"/><rect x="188.72" y="13" width="0.8" height="4" fill="#737270"/><rect x="191.68" y="13" width="0.8" height="4" fill="#737270"/><rect x="194.64" y="13" width="0.8" height="4" fill="#737270"/><rect x="197.60" y="11" width="0.8" height="6" fill="#737270"/><rect x="200.56" y="13" width="0.8" height="4" fill="#737270"/><rect x="203.52" y="13" width="0.8" height="4" fill="#737270"/><rect x="206.48" y="13" width="0.8" height="4" fill="#737270"/><rect x="209.44" y="13" width="0.8" height="4" fill="#737270"/><rect x="212.40" y="1" width="0.8" height="16" fill="#7c7a78"/><text x="214.90" y="9" font-size="6.5" fill="#888684" font-family="Liberation Sans">65</text><rect x="215.36" y="13" width="0.8" height="4" fill="#737270"/><rect x="218.32" y="13" width="0.8" height="4" fill="#737270"/><rect x="221.28" y="13" width="0.8" height="4" fill="#737270"/><rect x="224.24" y="13" width="0.8" height="4" fill="#737270"/><rect x="227.20" y="11" width="0.8" height="6" fill="#737270"/><rect x="230.16" y="13" width="0.8" height="4" fill="#737270"/><rect x="233.12" y="13" width="0.8" height="4" fill="#737270"/><rect x="236.08" y="13" width="0.8" height="4" fill="#737270"/><rect x="239.04" y="13" width="0.8" height="4" fill="#737270"/><rect x="242.00" y="1" width="0.8" height="16" fill="#7c7a78"/><text x="244.50" y="9" font-size="6.5" fill="#888684" font-family="Liberation Sans">70</text><rect x="244.96" y="13" width="0.8" height="4" fill="#737270"/><rect x="247.92" y="13" width="0.8" height="4" fill="#737270"/><rect x="250.88" y="13" width="0.8" height="4" fill="#737270"/><rect x="253.84" y="13" width="0.8" height="4" fill="#737270"/><rect x="256.80" y="11" width="0.8" height="6" fill="#737270"/><rect x="259.76" y="13" width="0.8" height="4" fill="#737270"/><rect x="262.72" y="13" width="0.8" height="4" fill="#737270"/><rect x="265.68" y="13" width="0.8" height="4" fill="#737270"/><rect x="268.64" y="13" width="0.8" height="4" fill="#737270"/><rect x="271.60" y="1" width="0.8" height="16" fill="#7c7a78"/><text x="274.10" y="9" font-size="6.5" fill="#888684" font-family="Liberation Sans">75</text><rect x="274.56" y="13" width="0.8" height="4" fill="#737270"/><rect x="277.52" y="13" width="0.8" height="4" fill="#737270"/><rect x="280.48" y="13" width="0.8" height="4" fill="#737270"/><rect x="283.44" y="13" width="0.8" height="4" fill="#737270"/><rect x="286.40" y="11" width="0.8" height="6" fill="#737270"/><rect x="289.36" y="13" width="0.8" height="4" fill="#737270"/><rect x="292.32" y="13" width="0.8" height="4" fill="#737270"/><rect x="295.28" y="13" width="0.8" height="4" fill="#737270"/><rect x="298.24" y="13" width="0.8" height="4" fill="#737270"/><rect x="301.20" y="1" width="0.8" height="16" fill="#7c7a78"/><text x="303.70" y="9" font-size="6.5" fill="#888684" font-family="Liberation Sans">80</text><rect x="304.16" y="13" width="0.8" height="4" fill="#737270"/><rect x="307.12" y="13" width="0.8" height="4" fill="#737270"/><rect x="310.08" y="13" width="0.8" height="4" fill="#737270"/><rect x="313.04" y="13" width="0.8" height="4" fill="#737270"/><rect x="316.00" y="11" width="0.8" height="6" fill="#737270"/><rect x="318.96" y="13" width="0.8" height="4" fill="#737270"/><rect x="321.92" y="13" width="0.8" height="4" fill="#737270"/><rect x="324.88" y="13" width="0.8" height="4" fill="#737270"/><rect x="327.84" y="13" width="0.8" height="4" fill="#737270"/><rect x="330.80" y="1" width="0.8" height="16" fill="#7c7a78"/><text x="333.30" y="9" font-size="6.5" fill="#888684" font-family="Liberation Sans">85</text><rect x="333.76" y="13" width="0.8" height="4" fill="#737270"/><rect x="336.72" y="13" width="0.8" height="4" fill="#737270"/><rect x="339.68" y="13" width="0.8" height="4" fill="#737270"/><rect x="342.64" y="13" width="0.8" height="4" fill="#737270"/><rect x="345.60" y="11" width="0.8" height="6" fill="#737270"/><rect x="348.56" y="13" width="0.8" height="4" fill="#737270"/><rect x="351.52" y="13" width="0.8" height="4" fill="#737270"/><rect x="354.48" y="13" width="0.8" height="4" fill="#737270"/><rect x="357.44" y="13" width="0.8" height="4" fill="#737270"/><rect x="360.40" y="1" width="0.8" height="16" fill="#7c7a78"/><text x="362.90" y="9" font-size="6.5" fill="#888684" font-family="Liberation Sans">90</text><rect x="363.36" y="13" width="0.8" height="4" fill="#737270"/><rect x="366.32" y="13" width="0.8" height="4" fill="#737270"/><rect x="369.28" y="13" width="0.8" height="4" fill="#737270"/><rect x="372.24" y="13" width="0.8" height="4" fill="#737270"/><rect x="375.20" y="11" width="0.8" height="6" fill="#737270"/><rect x="378.16" y="13" width="0.8" height="4" fill="#737270"/><rect x="381.12" y="13" width="0.8" height="4" fill="#737270"/><rect x="384.08" y="13" width="0.8" height="4" fill="#737270"/><rect x="387.04" y="13" width="0.8" height="4" fill="#737270"/><rect x="390.00" y="1" width="0.8" height="16" fill="#7c7a78"/><text x="392.50" y="9" font-size="6.5" fill="#888684" font-family="Liberation Sans">95</text><rect x="392.96" y="13" width="0.8" height="4" fill="#737270"/><rect x="395.92" y="13" width="0.8" height="4" fill="#737270"/><rect x="398.88" y="13" width="0.8" height="4" fill="#737270"/><rect x="401.84" y="13" width="0.8" height="4" fill="#737270"/><rect x="404.80" y="11" width="0.8" height="6" fill="#737270"/><rect x="407.76" y="13" width="0.8" height="4" fill="#737270"/><rect x="410.72" y="13" width="0.8" height="4" fill="#737270"/><rect x="413.68" y="13" width="0.8" height="4" fill="#737270"/><rect x="416.64" y="13" width="0.8" height="4" fill="#737270"/><rect x="419.60" y="1" width="0.8" height="16" fill="#7c7a78"/><text x="422.10" y="9" font-size="6.5" fill="#888684" font-family="Liberation Sans">100</text><rect x="422.56" y="13" width="0.8" height="4" fill="#737270"/><rect x="425.52" y="13" width="0.8" height="4" fill="#737270"/><rect x="428.48" y="13" width="0.8" height="4" fill="#737270"/><rect x="431.44" y="13" width="0.8" height="4" fill="#737270"/><rect x="434.40" y="11" width="0.8" height="6" fill="#737270"/><rect x="437.36" y="13" width="0.8" height="4" fill="#737270"/><rect x="440.32" y="13" width="0.8" height="4" fill="#737270"/><rect x="443.28" y="13" width="0.8" height="4" fill="#737270"/><rect x="446.24" y="13" width="0.8" height="4" fill="#737270"/><rect x="449.20" y="1" width="0.8" height="16" fill="#7c7a78"/><text x="451.70" y="9" font-size="6.5" fill="#888684" font-family="Liberation Sans">105</text><rect x="452.16" y="13" width="0.8" height="4" fill="#737270"/><rect x="455.12" y="13" width="0.8" height="4" fill="#737270"/><rect x="458.08" y="13" width="0.8" height="4" fill="#737270"/><rect x="461.04" y="13" width="0.8" height="4" fill="#737270"/><rect x="464.00" y="11" width="0.8" height="6" fill="#737270"/><rect x="466.96" y="13" width="0.8" height="4" fill="#737270"/><rect x="469.92" y="13" width="0.8" height="4" fill="#737270"/><rect x="472.88" y="13" width="0.8" height="4" fill="#737270"/><rect x="475.84" y="13" width="0.8" height="4" fill="#737270"/><rect x="478.80" y="1" width="0.8" height="16" fill="#7c7a78"/><text x="481.30" y="9" font-size="6.5" fill="#888684" font-family="Liberation Sans">110</text><rect x="481.76" y="13" width="0.8" height="4" fill="#737270"/><rect x="484.72" y="13" width="0.8" height="4" fill="#737270"/><rect x="487.68" y="13" width="0.8" height="4" fill="#737270"/><rect x="490.64" y="13" width="0.8" height="4" fill="#737270"/><rect x="493.60" y="11" width="0.8" height="6" fill="#737270"/><rect x="496.56" y="13" width="0.8" height="4" fill="#737270"/><rect x="499.52" y="13" width="0.8" height="4" fill="#737270"/><rect x="502.48" y="13" width="0.8" height="4" fill="#737270"/><rect x="505.44" y="13" width="0.8" height="4" fill="#737270"/><rect x="508.40" y="1" width="0.8" height="16" fill="#7c7a78"/><text x="510.90" y="9" font-size="6.5" fill="#888684" font-family="Liberation Sans">115</text><rect x="511.36" y="13" width="0.8" height="4" fill="#737270"/><rect x="514.32" y="13" width="0.8" height="4" fill="#737270"/><rect x="517.28" y="13" width="0.8" height="4" fill="#737270"/><rect x="520.24" y="13" width="0.8" height="4" fill="#737270"/><rect x="523.20" y="11" width="0.8" height="6" fill="#737270"/><rect x="526.16" y="13" width="0.8" height="4" fill="#737270"/><rect x="529.12" y="13" width="0.8" height="4" fill="#737270"/><rect x="532.08" y="13" width="0.8" height="4" fill="#737270"/><rect x="535.04" y="13" width="0.8" height="4" fill="#737270"/><rect x="538.00" y="1" width="0.8" height="16" fill="#7c7a78"/><text x="540.50" y="9" font-size="6.5" fill="#888684" font-family="Liberation Sans">120</text><rect x="540.96" y="13" width="0.8" height="4" fill="#737270"/><rect x="543.92" y="13" width="0.8" height="4" fill="#737270"/><rect x="546.88" y="13" width="0.8" height="4" fill="#737270"/><rect x="549.84" y="13" width="0.8" height="4" fill="#737270"/><rect x="552.80" y="11" width="0.8" height="6" fill="#737270"/><rect x="555.76" y="13" width="0.8" height="4" fill="#737270"/><rect x="558.72" y="13" width="0.8" height="4" fill="#737270"/><rect x="561.68" y="13" width="0.8" height="4" fill="#737270"/><rect x="564.64" y="13" width="0.8" height="4" fill="#737270"/><rect x="567.60" y="1" width="0.8" height="16" fill="#7c7a78"/><text x="570.10" y="9" font-size="6.5" fill="#888684" font-family="Liberation Sans">125</text><rect x="570.56" y="13" width="0.8" height="4" fill="#737270"/><rect x="573.52" y="13" width="0.8" height="4" fill="#737270"/><rect x="576.48" y="13" width="0.8" height="4" fill="#737270"/><rect x="579.44" y="13" width="0.8" height="4" fill="#737270"/><rect x="582.40" y="11" width="0.8" height="6" fill="#737270"/><rect x="585.36" y="13" width="0.8" height="4" fill="#737270"/><rect x="588.32" y="13" width="0.8" height="4" fill="#737270"/><rect x="591.28" y="13" width="0.8" height="4" fill="#737270"/><rect x="594.24" y="13" width="0.8" height="4" fill="#737270"/><rect x="597.20" y="1" width="0.8" height="16" fill="#7c7a78"/><text x="599.70" y="9" font-size="6.5" fill="#888684" font-family="Liberation Sans">130</text><rect x="600.16" y="13" width="0.8" height="4" fill="#737270"/><rect x="603.12" y="13" width="0.8" height="4" fill="#737270"/><rect x="606.08" y="13" width="0.8" height="4" fill="#737270"/><rect x="609.04" y="13" width="0.8" height="4" fill="#737270"/><rect x="612.00" y="11" width="0.8" height="6" fill="#737270"/><rect x="614.96" y="13" width="0.8" height="4" fill="#737270"/><rect x="617.92" y="13" width="0.8" height="4" fill="#737270"/><rect x="620.88" y="13" width="0.8" height="4" fill="#737270"/><rect x="623.84" y="13" width="0.8" height="4" fill="#737270"/><rect x="626.80" y="1" width="0.8" height="16" fill="#7c7a78"/><text x="629.30" y="9" font-size="6.5" fill="#888684" font-family="Liberation Sans">135</text><rect x="629.76" y="13" width="0.8" height="4" fill="#737270"/><rect x="632.72" y="13" width="0.8" height="4" fill="#737270"/><rect x="635.68" y="13" width="0.8" height="4" fill="#737270"/><rect x="638.64" y="13" width="0.8" height="4" fill="#737270"/><rect x="641.60" y="11" width="0.8" height="6" fill="#737270"/><rect x="644.56" y="13" width="0.8" height="4" fill="#737270"/><rect x="647.52" y="13" width="0.8" height="4" fill="#737270"/><rect x="650.48" y="13" width="0.8" height="4" fill="#737270"/><rect x="653.44" y="13" width="0.8" height="4" fill="#737270"/><rect x="656.40" y="1" width="0.8" height="16" fill="#7c7a78"/><text x="658.90" y="9" font-size="6.5" fill="#888684" font-family="Liberation Sans">140</text><rect x="659.36" y="13" width="0.8" height="4" fill="#737270"/><rect x="662.32" y="13" width="0.8" height="4" fill="#737270"/><rect x="665.28" y="13" width="0.8" height="4" fill="#737270"/><rect x="668.24" y="13" width="0.8" height="4" fill="#737270"/><rect x="671.20" y="11" width="0.8" height="6" fill="#737270"/><rect x="674.16" y="13" width="0.8" height="4" fill="#737270"/><rect x="677.12" y="13" width="0.8" height="4" fill="#737270"/><rect x="680.08" y="13" width="0.8" height="4" fill="#737270"/><rect x="683.04" y="13" width="0.8" height="4" fill="#737270"/><rect x="686.00" y="1" width="0.8" height="16" fill="#7c7a78"/><text x="688.50" y="9" font-size="6.5" fill="#888684" font-family="Liberation Sans">145</text><rect x="688.96" y="13" width="0.8" height="4" fill="#737270"/><rect x="691.92" y="13" width="0.8" height="4" fill="#737270"/><rect x="694.88" y="13" width="0.8" height="4" fill="#737270"/><rect x="697.84" y="13" width="0.8" height="4" fill="#737270"/><rect x="700.80" y="11" width="0.8" height="6" fill="#737270"/><rect x="703.76" y="13" width="0.8" height="4" fill="#737270"/><rect x="706.72" y="13" width="0.8" height="4" fill="#737270"/></svg>
<div class="a" style="left:58px;top:72px;width:8.5px;height:451px;background:#312f30;"></div>
<svg class="a" style="left:58px;top:89px;" width="8.5" height="434" viewBox="0 0 8.5 434"><rect x="6.5" y="1.54" width="2" height="0.8" fill="#666463"/><rect x="0.5" y="4.50" width="8" height="0.8" fill="#666463"/><text transform="translate(5.2 7.50) rotate(90)" font-size="6" fill="#8f8d8b" font-family="Liberation Sans">5</text><rect x="6.5" y="7.46" width="2" height="0.8" fill="#666463"/><rect x="6.5" y="10.42" width="2" height="0.8" fill="#666463"/><rect x="6.5" y="13.38" width="2" height="0.8" fill="#666463"/><rect x="6.5" y="16.34" width="2" height="0.8" fill="#666463"/><rect x="4.5" y="19.30" width="4" height="0.8" fill="#666463"/><rect x="6.5" y="22.26" width="2" height="0.8" fill="#666463"/><rect x="6.5" y="25.22" width="2" height="0.8" fill="#666463"/><rect x="6.5" y="28.18" width="2" height="0.8" fill="#666463"/><rect x="6.5" y="31.14" width="2" height="0.8" fill="#666463"/><rect x="0.5" y="34.10" width="8" height="0.8" fill="#666463"/><text transform="translate(5.2 37.10) rotate(90)" font-size="6" fill="#8f8d8b" font-family="Liberation Sans">10</text><rect x="6.5" y="37.06" width="2" height="0.8" fill="#666463"/><rect x="6.5" y="40.02" width="2" height="0.8" fill="#666463"/><rect x="6.5" y="42.98" width="2" height="0.8" fill="#666463"/><rect x="6.5" y="45.94" width="2" height="0.8" fill="#666463"/><rect x="4.5" y="48.90" width="4" height="0.8" fill="#666463"/><rect x="6.5" y="51.86" width="2" height="0.8" fill="#666463"/><rect x="6.5" y="54.82" width="2" height="0.8" fill="#666463"/><rect x="6.5" y="57.78" width="2" height="0.8" fill="#666463"/><rect x="6.5" y="60.74" width="2" height="0.8" fill="#666463"/><rect x="0.5" y="63.70" width="8" height="0.8" fill="#666463"/><text transform="translate(5.2 66.70) rotate(90)" font-size="6" fill="#8f8d8b" font-family="Liberation Sans">15</text><rect x="6.5" y="66.66" width="2" height="0.8" fill="#666463"/><rect x="6.5" y="69.62" width="2" height="0.8" fill="#666463"/><rect x="6.5" y="72.58" width="2" height="0.8" fill="#666463"/><rect x="6.5" y="75.54" width="2" height="0.8" fill="#666463"/><rect x="4.5" y="78.50" width="4" height="0.8" fill="#666463"/><rect x="6.5" y="81.46" width="2" height="0.8" fill="#666463"/><rect x="6.5" y="84.42" width="2" height="0.8" fill="#666463"/><rect x="6.5" y="87.38" width="2" height="0.8" fill="#666463"/><rect x="6.5" y="90.34" width="2" height="0.8" fill="#666463"/><rect x="0.5" y="93.30" width="8" height="0.8" fill="#666463"/><text transform="translate(5.2 96.30) rotate(90)" font-size="6" fill="#8f8d8b" font-family="Liberation Sans">20</text><rect x="6.5" y="96.26" width="2" height="0.8" fill="#666463"/><rect x="6.5" y="99.22" width="2" height="0.8" fill="#666463"/><rect x="6.5" y="102.18" width="2" height="0.8" fill="#666463"/><rect x="6.5" y="105.14" width="2" height="0.8" fill="#666463"/><rect x="4.5" y="108.10" width="4" height="0.8" fill="#666463"/><rect x="6.5" y="111.06" width="2" height="0.8" fill="#666463"/><rect x="6.5" y="114.02" width="2" height="0.8" fill="#666463"/><rect x="6.5" y="116.98" width="2" height="0.8" fill="#666463"/><rect x="6.5" y="119.94" width="2" height="0.8" fill="#666463"/><rect x="0.5" y="122.90" width="8" height="0.8" fill="#666463"/><text transform="translate(5.2 125.90) rotate(90)" font-size="6" fill="#8f8d8b" font-family="Liberation Sans">25</text><rect x="6.5" y="125.86" width="2" height="0.8" fill="#666463"/><rect x="6.5" y="128.82" width="2" height="0.8" fill="#666463"/><rect x="6.5" y="131.78" width="2" height="0.8" fill="#666463"/><rect x="6.5" y="134.74" width="2" height="0.8" fill="#666463"/><rect x="4.5" y="137.70" width="4" height="0.8" fill="#666463"/><rect x="6.5" y="140.66" width="2" height="0.8" fill="#666463"/><rect x="6.5" y="143.62" width="2" height="0.8" fill="#666463"/><rect x="6.5" y="146.58" width="2" height="0.8" fill="#666463"/><rect x="6.5" y="149.54" width="2" height="0.8" fill="#666463"/><rect x="0.5" y="152.50" width="8" height="0.8" fill="#666463"/><text transform="translate(5.2 155.50) rotate(90)" font-size="6" fill="#8f8d8b" font-family="Liberation Sans">30</text><rect x="6.5" y="155.46" width="2" height="0.8" fill="#666463"/><rect x="6.5" y="158.42" width="2" height="0.8" fill="#666463"/><rect x="6.5" y="161.38" width="2" height="0.8" fill="#666463"/><rect x="6.5" y="164.34" width="2" height="0.8" fill="#666463"/><rect x="4.5" y="167.30" width="4" height="0.8" fill="#666463"/><rect x="6.5" y="170.26" width="2" height="0.8" fill="#666463"/><rect x="6.5" y="173.22" width="2" height="0.8" fill="#666463"/><rect x="6.5" y="176.18" width="2" height="0.8" fill="#666463"/><rect x="6.5" y="179.14" width="2" height="0.8" fill="#666463"/><rect x="0.5" y="182.10" width="8" height="0.8" fill="#666463"/><text transform="translate(5.2 185.10) rotate(90)" font-size="6" fill="#8f8d8b" font-family="Liberation Sans">35</text><rect x="6.5" y="185.06" width="2" height="0.8" fill="#666463"/><rect x="6.5" y="188.02" width="2" height="0.8" fill="#666463"/><rect x="6.5" y="190.98" width="2" height="0.8" fill="#666463"/><rect x="6.5" y="193.94" width="2" height="0.8" fill="#666463"/><rect x="4.5" y="196.90" width="4" height="0.8" fill="#666463"/><rect x="6.5" y="199.86" width="2" height="0.8" fill="#666463"/><rect x="6.5" y="202.82" width="2" height="0.8" fill="#666463"/><rect x="6.5" y="205.78" width="2" height="0.8" fill="#666463"/><rect x="6.5" y="208.74" width="2" height="0.8" fill="#666463"/><rect x="0.5" y="211.70" width="8" height="0.8" fill="#666463"/><text transform="translate(5.2 214.70) rotate(90)" font-size="6" fill="#8f8d8b" font-family="Liberation Sans">40</text><rect x="6.5" y="214.66" width="2" height="0.8" fill="#666463"/><rect x="6.5" y="217.62" width="2" height="0.8" fill="#666463"/><rect x="6.5" y="220.58" width="2" height="0.8" fill="#666463"/><rect x="6.5" y="223.54" width="2" height="0.8" fill="#666463"/><rect x="4.5" y="226.50" width="4" height="0.8" fill="#666463"/><rect x="6.5" y="229.46" width="2" height="0.8" fill="#666463"/><rect x="6.5" y="232.42" width="2" height="0.8" fill="#666463"/><rect x="6.5" y="235.38" width="2" height="0.8" fill="#666463"/><rect x="6.5" y="238.34" width="2" height="0.8" fill="#666463"/><rect x="0.5" y="241.30" width="8" height="0.8" fill="#666463"/><text transform="translate(5.2 244.30) rotate(90)" font-size="6" fill="#8f8d8b" font-family="Liberation Sans">45</text><rect x="6.5" y="244.26" width="2" height="0.8" fill="#666463"/><rect x="6.5" y="247.22" width="2" height="0.8" fill="#666463"/><rect x="6.5" y="250.18" width="2" height="0.8" fill="#666463"/><rect x="6.5" y="253.14" width="2" height="0.8" fill="#666463"/><rect x="4.5" y="256.10" width="4" height="0.8" fill="#666463"/><rect x="6.5" y="259.06" width="2" height="0.8" fill="#666463"/><rect x="6.5" y="262.02" width="2" height="0.8" fill="#666463"/><rect x="6.5" y="264.98" width="2" height="0.8" fill="#666463"/><rect x="6.5" y="267.94" width="2" height="0.8" fill="#666463"/><rect x="0.5" y="270.90" width="8" height="0.8" fill="#666463"/><text transform="translate(5.2 273.90) rotate(90)" font-size="6" fill="#8f8d8b" font-family="Liberation Sans">50</text><rect x="6.5" y="273.86" width="2" height="0.8" fill="#666463"/><rect x="6.5" y="276.82" width="2" height="0.8" fill="#666463"/><rect x="6.5" y="279.78" width="2" height="0.8" fill="#666463"/><rect x="6.5" y="282.74" width="2" height="0.8" fill="#666463"/><rect x="4.5" y="285.70" width="4" height="0.8" fill="#666463"/><rect x="6.5" y="288.66" width="2" height="0.8" fill="#666463"/><rect x="6.5" y="291.62" width="2" height="0.8" fill="#666463"/><rect x="6.5" y="294.58" width="2" height="0.8" fill="#666463"/><rect x="6.5" y="297.54" width="2" height="0.8" fill="#666463"/><rect x="0.5" y="300.50" width="8" height="0.8" fill="#666463"/><text transform="translate(5.2 303.50) rotate(90)" font-size="6" fill="#8f8d8b" font-family="Liberation Sans">55</text><rect x="6.5" y="303.46" width="2" height="0.8" fill="#666463"/><rect x="6.5" y="306.42" width="2" height="0.8" fill="#666463"/><rect x="6.5" y="309.38" width="2" height="0.8" fill="#666463"/><rect x="6.5" y="312.34" width="2" height="0.8" fill="#666463"/><rect x="4.5" y="315.30" width="4" height="0.8" fill="#666463"/><rect x="6.5" y="318.26" width="2" height="0.8" fill="#666463"/><rect x="6.5" y="321.22" width="2" height="0.8" fill="#666463"/><rect x="6.5" y="324.18" width="2" height="0.8" fill="#666463"/><rect x="6.5" y="327.14" width="2" height="0.8" fill="#666463"/><rect x="0.5" y="330.10" width="8" height="0.8" fill="#666463"/><text transform="translate(5.2 333.10) rotate(90)" font-size="6" fill="#8f8d8b" font-family="Liberation Sans">60</text><rect x="6.5" y="333.06" width="2" height="0.8" fill="#666463"/><rect x="6.5" y="336.02" width="2" height="0.8" fill="#666463"/><rect x="6.5" y="338.98" width="2" height="0.8" fill="#666463"/><rect x="6.5" y="341.94" width="2" height="0.8" fill="#666463"/><rect x="4.5" y="344.90" width="4" height="0.8" fill="#666463"/><rect x="6.5" y="347.86" width="2" height="0.8" fill="#666463"/><rect x="6.5" y="350.82" width="2" height="0.8" fill="#666463"/><rect x="6.5" y="353.78" width="2" height="0.8" fill="#666463"/><rect x="6.5" y="356.74" width="2" height="0.8" fill="#666463"/><rect x="0.5" y="359.70" width="8" height="0.8" fill="#666463"/><text transform="translate(5.2 362.70) rotate(90)" font-size="6" fill="#8f8d8b" font-family="Liberation Sans">65</text><rect x="6.5" y="362.66" width="2" height="0.8" fill="#666463"/><rect x="6.5" y="365.62" width="2" height="0.8" fill="#666463"/><rect x="6.5" y="368.58" width="2" height="0.8" fill="#666463"/><rect x="6.5" y="371.54" width="2" height="0.8" fill="#666463"/><rect x="4.5" y="374.50" width="4" height="0.8" fill="#666463"/><rect x="6.5" y="377.46" width="2" height="0.8" fill="#666463"/><rect x="6.5" y="380.42" width="2" height="0.8" fill="#666463"/><rect x="6.5" y="383.38" width="2" height="0.8" fill="#666463"/><rect x="6.5" y="386.34" width="2" height="0.8" fill="#666463"/><rect x="0.5" y="389.30" width="8" height="0.8" fill="#666463"/><text transform="translate(5.2 392.30) rotate(90)" font-size="6" fill="#8f8d8b" font-family="Liberation Sans">70</text><rect x="6.5" y="392.26" width="2" height="0.8" fill="#666463"/><rect x="6.5" y="395.22" width="2" height="0.8" fill="#666463"/><rect x="6.5" y="398.18" width="2" height="0.8" fill="#666463"/><rect x="6.5" y="401.14" width="2" height="0.8" fill="#666463"/><rect x="4.5" y="404.10" width="4" height="0.8" fill="#666463"/><rect x="6.5" y="407.06" width="2" height="0.8" fill="#666463"/><rect x="6.5" y="410.02" width="2" height="0.8" fill="#666463"/><rect x="6.5" y="412.98" width="2" height="0.8" fill="#666463"/><rect x="6.5" y="415.94" width="2" height="0.8" fill="#666463"/><rect x="0.5" y="418.90" width="8" height="0.8" fill="#666463"/><text transform="translate(5.2 421.90) rotate(90)" font-size="6" fill="#8f8d8b" font-family="Liberation Sans">75</text><rect x="6.5" y="421.86" width="2" height="0.8" fill="#666463"/><rect x="6.5" y="424.82" width="2" height="0.8" fill="#666463"/><rect x="6.5" y="427.78" width="2" height="0.8" fill="#666463"/><rect x="6.5" y="430.74" width="2" height="0.8" fill="#666463"/><rect x="4.5" y="433.70" width="4" height="0.8" fill="#666463"/></svg>
<svg class="a" style="left:66.5px;top:89px" width="706.5" height="434" viewBox="66.5 89 706.5 434">
<rect x="66.5" y="89" width="706.5" height="434" fill="#c79a6f"/>
<circle cx="312.2" cy="331" r="188.6" fill="#8b6238" stroke="#a65b3c" stroke-width="2.2"/><circle cx="312.2" cy="331" r="189.2" fill="none" stroke="#dc8a6a" stroke-width="1.1"/>
<path d="M312.2 157.2 Q295.5 176 277.2 191.6 Q312 166.5 347 191.6 Q328.5 176 312.2 157.2 Z" fill="#f3f0f3"/>
<circle cx="313" cy="331" r="0.8" fill="#c0604a"/>
<rect x="66.5" y="522" width="706.5" height="1" fill="#dcc0a0" opacity="0.7"/>
<rect x="772" y="89" width="1" height="434" fill="#d8bc98" opacity="0.5"/>
</svg>
<div class="a" style="left:773px;top:72px;width:14px;height:451px;background:#4b474b;"></div>
<svg class="a" style="left:776px;top:77px;" width="9" height="6" viewBox="0 0 9 6"><path d="M1 5 L4.5 1.5 L8 5" stroke="#cfccce" stroke-width="1.4" fill="none"/></svg>
<div class="a" style="left:775px;top:287px;width:10px;height:19.5px;background:#6c696b;border-radius:5px"></div>
<div class="a" style="left:58px;top:523px;width:715px;height:13px;background:#534e53;"></div>
<div class="a" style="left:58px;top:523px;width:715px;height:1px;background:#3e3b3d;"></div>
<div class="a" style="left:61px;top:524px;width:39px;height:12px;background:#4b474b;"></div>
<div class="t" data-w="18" id="t24" style="left:64px;top:524.5px;font-size:9.5px;line-height:10.5px;color:#e3e0e2;transform:scaleX(0.6667);transform-origin:0 0;">400%</div>
<svg class="a" style="left:103px;top:528px;" width="9" height="6" viewBox="0 0 9 6"><path d="M1 1 L4.5 4.5 L8 1" stroke="#dcd9db" stroke-width="1.6" fill="none"/></svg>
<svg class="a" style="left:120px;top:525px;" width="30" height="10" viewBox="0 0 30 10"><path d="M2 2 V8 M8 2 L4 5 L8 8" stroke="#77747a" stroke-width="1.2" fill="none"/><path d="M20 2 L16 5 L20 8 Z" fill="#77747a"/></svg>
<div class="t" style="left:151px;top:524.5px;font-size:9.5px;line-height:10.5px;color:#e3e0e2;">1</div>
<svg class="a" style="left:181px;top:528px;" width="9" height="6" viewBox="0 0 9 6"><path d="M1 1 L4.5 4.5 L8 1" stroke="#dcd9db" stroke-width="1.6" fill="none"/></svg>
<svg class="a" style="left:198px;top:525px;" width="26" height="10" viewBox="0 0 26 10"><path d="M3 2 L7 5 L3 8 Z" fill="#77747a"/><path d="M13 2 L17 5 L13 8 M19 2 V8" stroke="#77747a" stroke-width="1.2" fill="none"/></svg>
<div class="t" data-w="20" id="t26" style="left:293px;top:524.5px;font-size:9.5px;line-height:10.5px;color:#d6d3d5;transform:scaleX(1.0526);transform-origin:0 0;"><svg class="g" viewBox="0 0 10 10"><path d="M0.9 2.2 H8.1 M1.7 3.6 H8.8 M0.9 8.9 H8.5 M8.8 2.2 V8.9 M5.0 3.7 V6.9 M5.0 3.6 L0.6 9.6 M5.4 3.6 L9.5 9.5" stroke-width="1.1"/></svg><svg class="g" viewBox="0 0 10 10"><path d="M0.9 0.9 H8.1 M2.0 6.6 H9.2 M1.6 8.9 H8.7 M1.3 2.4 V8.9 M5.0 0.9 V8.9 M8.8 0.9 V8.9" stroke-width="1.1"/></svg></div>
<svg class="a" style="left:384px;top:525px;" width="8" height="10" viewBox="0 0 8 10"><path d="M1 1 L7 5 L1 9 Z" fill="#e3e0e2"/></svg>
<div class="a" style="left:395px;top:523px;width:378px;height:13px;background:#4b474b;"></div>
<svg class="a" style="left:399px;top:526px;" width="6" height="8" viewBox="0 0 6 8"><path d="M5 1 L1.5 4 L5 7" stroke="#a9a6a8" stroke-width="1.2" fill="none"/></svg>
<div class="a" style="left:574.5px;top:524.5px;width:19px;height:10.5px;background:#656264;border-radius:5px"></div>
<svg class="a" style="left:764px;top:526px;" width="6" height="8" viewBox="0 0 6 8"><path d="M1 1 L4.5 4 L1 7" stroke="#a9a6a8" stroke-width="1.2" fill="none"/></svg>
<div class="a" style="left:653.6px;top:515px;width:64.7px;height:19.8px;background:#fbfcfd;border:1px solid #7d8289;border-top-color:#6a6e74"></div>
<svg class="a" style="left:658px;top:520.5px;" width="12" height="10" viewBox="0 0 12 10"><path d="M0.5 2 H11.5 M3.5 0.3 V3.5 M8.5 0.3 V3.5 M2.5 4.5 H9.5 V7 M2.5 4.5 V7 M0.5 7 H11.5 M6 3.5 V7 C5.5 8.5 3.5 9.5 1 9.8 M6.5 7.5 C8 8.8 10 9.5 11.5 9.8" stroke="#34557a" stroke-width="1" fill="none"/></svg>
<svg class="a" style="left:673px;top:519.5px;" width="11" height="11" viewBox="0 0 11 11"><path d="M5 0.8 C9.5 2 11 7 8.5 9.5 C6.5 11 2.5 11 0.8 9.2 C4.5 9 7.5 5 5 0.8 Z" fill="#1f6fc0"/></svg>
<svg class="a" style="left:689px;top:521px;" width="7" height="8" viewBox="0 0 7 8"><circle cx="2" cy="2.5" r="1.3" fill="#2a3b4c"/><path d="M4.5 5 L3.8 7.5" stroke="#2a3b4c" stroke-width="1.3"/></svg>
<svg class="a" style="left:701px;top:519.5px;" width="12" height="12" viewBox="0 0 12 12"><circle cx="6" cy="6" r="3.2" stroke="#2b5b8b" stroke-width="1.8" fill="#e8f2fa"/><path d="M6 0.5 V2.5 M6 9.5 V11.5 M0.5 6 H2.5 M9.5 6 H11.5 M2.1 2.1 L3.5 3.5 M8.5 8.5 L9.9 9.9 M9.9 2.1 L8.5 3.5 M2.1 9.9 L3.5 8.5" stroke="#2b5b8b" stroke-width="1.7"/></svg>
<div class="a" style="left:787px;top:50px;width:33px;height:486px;background:#4f4b4f;"></div>
<div class="a" style="left:786px;top:50px;width:1px;height:486px;background:#3b383b;"></div>
<div class="a" style="left:787px;top:50px;width:213px;height:10px;background:#413d41;"></div>
<svg class="a" style="left:807px;top:52px;" width="9" height="6" viewBox="0 0 9 6"><path d="M4 0.5 L1 3 L4 5.5 M8 0.5 L5 3 L8 5.5" stroke="#cfccce" stroke-width="1.1" fill="none"/></svg>
<svg class="a" style="left:989px;top:52px;" width="9" height="6" viewBox="0 0 9 6"><path d="M1 0.5 L4 3 L1 5.5 M5 0.5 L8 3 L5 5.5" stroke="#cfccce" stroke-width="1.1" fill="none"/></svg>
<div class="a" style="left:788px;top:61px;width:30px;height:52.5px;background:#514d51;border-bottom:1px solid #3e3b3d"></div>
<div class="a" style="left:797px;top:63.5px;width:12px;height:1px;background:#5f5c5e;"></div>
<div class="a" style="left:788px;top:115px;width:30px;height:28.5px;background:#514d51;border-bottom:1px solid #3e3b3d"></div>
<div class="a" style="left:797px;top:117.5px;width:12px;height:1px;background:#5f5c5e;"></div>
<div class="a" style="left:788px;top:145px;width:30px;height:54px;background:#514d51;border-bottom:1px solid #3e3b3d"></div>
<div class="a" style="left:797px;top:147.5px;width:12px;height:1px;background:#5f5c5e;"></div>
<div class="a" style="left:788px;top:201px;width:30px;height:31.5px;background:#514d51;border-bottom:1px solid #3e3b3d"></div>
<div class="a" style="left:797px;top:203.5px;width:12px;height:1px;background:#5f5c5e;"></div>
<div class="a" style="left:788px;top:234px;width:30px;height:29.5px;background:#514d51;border-bottom:1px solid #3e3b3d"></div>
<div class="a" style="left:797px;top:236.5px;width:12px;height:1px;background:#5f5c5e;"></div>
<div class="a" style="left:788px;top:265px;width:30px;height:29.5px;background:#514d51;border-bottom:1px solid #3e3b3d"></div>
<div class="a" style="left:797px;top:267.5px;width:12px;height:1px;background:#5f5c5e;"></div>
<div class="a" style="left:788px;top:296px;width:30px;height:29.5px;background:#514d51;border-bottom:1px solid #3e3b3d"></div>
<div class="a" style="left:797px;top:298.5px;width:12px;height:1px;background:#5f5c5e;"></div>
<div class="a" style="left:788px;top:327px;width:30px;height:31px;background:#514d51;border-bottom:1px solid #3e3b3d"></div>
<div class="a" style="left:797px;top:329.5px;width:12px;height:1px;background:#5f5c5e;"></div>
<svg class="a" style="left:796px;top:71px" width="13" height="14" viewBox="0 0 13 14"><defs><linearGradient id="qg" x1="0" y1="0" x2="1" y2="1"><stop offset="0" stop-color="#5a575a"/><stop offset="1" stop-color="#e8e5e8"/></linearGradient></defs><path d="M1 1 A12 12 0 0 1 12.5 13 H1 Z" fill="url(#qg)" stroke="#e0dde0" stroke-width="1"/></svg>
<svg class="a" style="left:796px;top:92px;" width="14" height="16" viewBox="0 0 14 16"><circle cx="6" cy="8" r="4.5" stroke="#d6d3d5" stroke-width="1.2" fill="none"/><circle cx="6" cy="8" r="1.6" fill="#d6d3d5"/><path d="M6 8 L11 2.5 M6 8 L11 13.5" stroke="#d6d3d5" stroke-width="1.2"/><circle cx="11" cy="2.5" r="1.8" fill="#d6d3d5"/><circle cx="11" cy="13.5" r="1.8" fill="#d6d3d5"/></svg>
<svg class="a" style="left:797px;top:123px;" width="13" height="17" viewBox="0 0 13 17"><path d="M2 9 H11 L10 16 H3 Z" fill="#d6d3d5"/><path d="M4 9 L2 2 M6.5 9 V1 M8.5 9 L10.5 3 M10 9 L12 6" stroke="#d6d3d5" stroke-width="1.6"/></svg>
<svg class="a" style="left:796px;top:157px;" width="16" height="15" viewBox="0 0 16 15"><path d="M7 13 L10.5 2 L14 13 M8.5 9 H12.5" stroke="#d6d3d5" stroke-width="1.4" fill="none"/><rect x="1" y="7.5" width="4" height="4" stroke="#d6d3d5" stroke-width="1" fill="none"/><rect x="3" y="9.5" width="4" height="4" stroke="#d6d3d5" stroke-width="1" fill="#514d51"/></svg>
<svg class="a" style="left:796px;top:179px;" width="16" height="15" viewBox="0 0 16 15"><path d="M11 2 V13 M13.5 2 V13 M13.5 2 H10 A3 3 0 0 0 10 8 H11" stroke="#d6d3d5" stroke-width="1.3" fill="#d6d3d5"/><rect x="1" y="7.5" width="4" height="4" stroke="#d6d3d5" stroke-width="1" fill="none"/><rect x="3" y="9.5" width="4" height="4" stroke="#d6d3d5" stroke-width="1" fill="#514d51"/></svg>
<svg class="a" style="left:796px;top:210px;" width="15" height="15" viewBox="0 0 15 15"><path d="M6 3 H2 V13 H12 V9 M8 2 H13 V7 M13 2 L7 8" stroke="#d6d3d5" stroke-width="1.4" fill="none"/></svg>
<svg class="a" style="left:796px;top:243px;" width="15" height="15" viewBox="0 0 15 15"><circle cx="6" cy="6" r="5" fill="#cfccce"/><circle cx="9" cy="9" r="5" fill="#8d8a8c" stroke="#cfccce" stroke-width="0.8"/></svg>
<svg class="a" style="left:796px;top:276px;" width="15" height="12" viewBox="0 0 15 12"><path d="M7.5 1 C12 1 14.5 4 14 7 C13.5 9 11 8 10 9.5 C9 11 10 11.5 7.5 11.5 C3 11.5 1 9 1 6 C1 3 4 1 7.5 1 Z" fill="#d6d3d5"/><circle cx="4" cy="6.5" r="1.2" fill="#514d51"/><circle cx="6.5" cy="3.8" r="1.2" fill="#514d51"/><circle cx="10" cy="4" r="1.2" fill="#514d51"/><circle cx="5.5" cy="9" r="1.2" fill="#514d51"/></svg>
<div class="a" style="left:796.5px;top:308.5px;width:13px;height:11px;border:1px solid #d6d3d5;background:linear-gradient(135deg,#3e3b3d,#d8d5d7)"></div>
<svg class="a" style="left:796px;top:339px;" width="15" height="14" viewBox="0 0 15 14"><path d="M7.5 1 L14 4.5 L7.5 8 L1 4.5 Z" fill="#d6d3d5"/><path d="M1 8 L7.5 11.5 L14 8" stroke="#d6d3d5" stroke-width="1.6" fill="none"/></svg>
<div class="a" style="left:820px;top:60px;width:180px;height:476px;background:#534e53;"></div>
<div class="a" style="left:818.5px;top:60px;width:1.5px;height:476px;background:#3b383b;"></div>
<div class="a" style="left:820px;top:60px;width:180px;height:21px;background:#464246;"></div>
<div class="a" style="left:851.7px;top:61px;width:1px;height:20px;background:#3c393b;"></div>
<div class="t" data-w="19" id="t27" style="left:826px;top:64.5px;font-size:10.5px;line-height:11.5px;color:#a6a3a5;transform:scaleX(0.9048);transform-origin:0 0;"><svg class="g" viewBox="0 0 10 10"><path d="M1.4 0.9 H8.6 M1.2 6.6 H7.9 M1.0 8.2 H9.1 M8.8 0.9 V6.2" stroke-width="1.1"/></svg><svg class="g" viewBox="0 0 10 10"><path d="M1.1 2.2 H8.8 M1.2 5.6 H8.7 M1.3 8.2 H8.4 M8.8 2.2 V8.2" stroke-width="1.1"/></svg></div>
<div class="a" style="left:851.7px;top:60px;width:33.299999999999955px;height:21px;background:#534e53;"></div>
<div class="t" data-w="23" id="t28" style="left:857px;top:64.5px;font-size:10.5px;line-height:11.5px;color:#efecee;transform:scaleX(1.0952);transform-origin:0 0;"><svg class="g" viewBox="0 0 10 10"><path d="M1.8 1.6 H8.4 M1.7 4.6 H8.1 M2.2 8.9 H8.0 M5.0 1.6 V6.9 M1.3 1.6 V8.9 M8.8 3.1 V8.9" stroke-width="1.1"/></svg><svg class="g" viewBox="0 0 10 10"><path d="M1.7 2.2 H8.5 M1.9 4.6 H8.4 M0.9 8.2 H8.1 M5.0 3.7 V8.2 M8.8 2.2 V8.2 M1.3 3.7 V8.2" stroke-width="1.1"/></svg></div>
<div class="a" style="left:920px;top:61px;width:1px;height:20px;background:#3c393b;"></div>
<div class="t" data-w="19" id="t29" style="left:892px;top:64.5px;font-size:10.5px;line-height:11.5px;color:#a6a3a5;transform:scaleX(0.9048);transform-origin:0 0;"><svg class="g" viewBox="0 0 10 10"><path d="M2.2 0.8 V9.4 M0.5 3.2 H3.8 M0.6 7.2 L3.6 5.8 M6.2 2.2 H9.0 M5.4 5.6 H9.2 M6.1 8.2 H9.0 M5.3 3.7 V6.2 M7.0 2.2 V8.2" stroke-width="1.1"/></svg><svg class="g" viewBox="0 0 10 10"><path d="M2.2 0.8 V9.4 M0.5 3.2 H3.8 M0.6 7.2 L3.6 5.8 M5.6 0.9 H8.6 M5.9 3.6 H9.2 M5.5 5.6 H8.2 M6.1 8.9 H8.1 M5.3 0.9 V8.9 M7.0 2.4 V6.9 M7.0 5.6 L4.6 9.6 M7.4 5.6 L9.5 9.5" stroke-width="1.1"/></svg></div>
<svg class="a" style="left:986px;top:66.5px;" width="9" height="8" viewBox="0 0 9 8"><rect x="0" y="0" width="9" height="8" fill="#a9a6a8"/><path d="M0 2.7 H9 M0 5.3 H9" stroke="#464246" stroke-width="0.8"/></svg>
<div class="a" style="left:823.5px;top:84.5px;width:172px;height:100.5px;background:#504c50;border:1px solid #464246"></div>
<div class="a" style="left:842.5px;top:105px;width:1px;height:80px;background:#464246;"></div>
<div class="a" style="left:824px;top:105px;width:162px;height:1px;background:#5a575a;"></div>
<div class="a" style="left:824px;top:124.5px;width:162px;height:1px;background:#5a575a;"></div>
<div class="a" style="left:824px;top:144px;width:162px;height:1px;background:#5a575a;"></div>
<div class="a" style="left:824px;top:163.5px;width:162px;height:1px;background:#5a575a;"></div>
<div class="a" style="left:986px;top:85px;width:9px;height:100px;background:#494549;"></div>
<svg class="a" style="left:987px;top:88px;" width="7" height="5" viewBox="0 0 7 5"><path d="M0.5 4 L3.5 1 L6.5 4" stroke="#8a878a" stroke-width="1.2" fill="none"/></svg>
<svg class="a" style="left:987px;top:177px;" width="7" height="5" viewBox="0 0 7 5"><path d="M0.5 1 L3.5 4 L6.5 1" stroke="#8a878a" stroke-width="1.2" fill="none"/></svg>
<div class="a" style="left:988px;top:95px;width:5px;height:70px;background:#5d5a5c;border-radius:2px"></div>
<div class="a" style="left:826px;top:88px;width:14.5px;height:14.5px;background:#f8f6f8;border:1px solid #3b383b"></div>
<div class="t" data-w="45" id="t30" style="left:864px;top:92px;font-size:10px;line-height:11px;color:#eceaec;transform:scaleX(0.9000);transform-origin:0 0;"><svg class="g" viewBox="0 0 10 10"><path d="M2.2 0.8 V9.4 M0.5 3.2 H3.8 M0.6 7.2 L3.6 5.8 M5.5 0.9 H9.1 M5.6 4.6 H8.7 M6.1 8.9 H9.0 M5.3 2.4 V8.9 M8.8 0.9 V8.9" stroke-width="1.1"/></svg><svg class="g" viewBox="0 0 10 10"><path d="M0.9 2.2 H8.1 M1.7 3.6 H8.8 M0.9 8.9 H8.5 M8.8 2.2 V8.9 M5.0 3.7 V6.9 M5.0 3.6 L0.6 9.6 M5.4 3.6 L9.5 9.5" stroke-width="1.1"/></svg><svg class="g" viewBox="0 0 10 10"><path d="M0.9 0.9 H8.1 M2.0 6.6 H9.2 M1.6 8.9 H8.7 M1.3 2.4 V8.9 M5.0 0.9 V8.9 M8.8 0.9 V8.9" stroke-width="1.1"/></svg><svg class="g" viewBox="0 0 10 10"><path d="M1.5 2.2 H8.7 M1.1 4.6 H8.6 M1.8 8.2 H8.8 M5.0 3.7 V6.2" stroke-width="1.1"/></svg><svg class="g" viewBox="0 0 10 10"><path d="M2.2 0.8 V9.4 M0.5 3.2 H3.8 M0.6 7.2 L3.6 5.8 M5.5 2.2 H9.1 M4.8 6.6 H8.4 M5.2 8.2 H8.1 M7.0 2.2 V6.2 M8.8 2.2 V8.2" stroke-width="1.1"/></svg></div>
<svg class="a" style="left:827px;top:111px;" width="12" height="8" viewBox="0 0 12 8"><path d="M0.5 4 C3 0.5 9 0.5 11.5 4 C9 7.5 3 7.5 0.5 4 Z" fill="#e6e3e5"/><circle cx="6" cy="4" r="1.8" fill="#504c50"/></svg>
<svg class="a" style="left:827px;top:130.5px;" width="12" height="8" viewBox="0 0 12 8"><path d="M0.5 4 C3 0.5 9 0.5 11.5 4 C9 7.5 3 7.5 0.5 4 Z" fill="#6a676a"/><circle cx="6" cy="4" r="1.8" fill="#504c50"/></svg>
<svg class="a" style="left:827px;top:150px;" width="12" height="8" viewBox="0 0 12 8"><path d="M0.5 4 C3 0.5 9 0.5 11.5 4 C9 7.5 3 7.5 0.5 4 Z" fill="#e6e3e5"/><circle cx="6" cy="4" r="1.8" fill="#504c50"/></svg>
<svg class="a" style="left:827px;top:169.5px;" width="12" height="8" viewBox="0 0 12 8"><path d="M0.5 4 C3 0.5 9 0.5 11.5 4 C9 7.5 3 7.5 0.5 4 Z" fill="#6a676a"/><circle cx="6" cy="4" r="1.8" fill="#504c50"/></svg>
<svg class="a" style="left:848px;top:112.5px;" width="9" height="6" viewBox="0 0 9 6"><path d="M1 1 L4.5 4.5 L8 1" stroke="#dcd9db" stroke-width="1.6" fill="none"/></svg>
<svg class="a" style="left:848px;top:151.5px;" width="9" height="6" viewBox="0 0 9 6"><path d="M1 1 L4.5 4.5 L8 1" stroke="#dcd9db" stroke-width="1.6" fill="none"/></svg>
<div class="t" data-w="24" id="t31" style="left:864px;top:109px;font-size:10px;line-height:11px;color:#e3e0e2;transform:scaleX(0.8000);transform-origin:0 0;border-bottom:1px solid currentColor;line-height:11px"><svg class="g" viewBox="0 0 10 10"><path d="M1.7 1.6 H9.3 M0.9 3.6 H8.8 M1.6 8.9 H9.3 M5.0 3.1 V6.9 M1.3 1.6 V6.9" stroke-width="1.1"/></svg><svg class="g" viewBox="0 0 10 10"><path d="M2.2 0.8 V9.4 M0.5 3.2 H3.8 M0.6 7.2 L3.6 5.8 M5.9 0.9 H8.5 M5.7 6.6 H8.4 M4.8 8.2 H8.8 M7.0 0.9 V8.2" stroke-width="1.1"/></svg><svg class="g" viewBox="0 0 10 10"><rect x="4" y="3" width="1.4" height="1.4"/><rect x="4" y="7.2" width="1.4" height="1.4"/></svg></div>
<div class="t" data-w="24" id="t32" style="left:864px;top:148px;font-size:10px;line-height:11px;color:#c8c5c7;transform:scaleX(0.8000);transform-origin:0 0;"><svg class="g" viewBox="0 0 10 10"><path d="M2.0 2.2 H8.3 M1.7 4.6 H9.2 M1.2 8.2 H8.2 M8.8 2.2 V6.2 M1.3 3.7 V8.2" stroke-width="1.1"/></svg><svg class="g" viewBox="0 0 10 10"><path d="M1.1 1.6 H8.1 M1.7 6.6 H8.3 M1.2 8.9 H8.1 M5.0 3.1 V8.9 M1.3 1.6 V6.9 M8.8 3.1 V6.9" stroke-width="1.1"/></svg><svg class="g" viewBox="0 0 10 10"><rect x="4" y="3" width="1.4" height="1.4"/><rect x="4" y="7.2" width="1.4" height="1.4"/></svg></div>
<svg class="a" style="left:896.5px;top:108.5px;" width="12.5" height="12.5" viewBox="0 0 12.5 12.5"><rect x="0.5" y="0.5" width="11.5" height="11.5" fill="#f2f0f2" stroke="#2a2829"/><path d="M2.5 10 L10 2.5" stroke="#b52a45" stroke-width="2"/></svg>
<svg class="a" style="left:896.5px;top:147.5px;" width="12.5" height="12.5" viewBox="0 0 12.5 12.5"><rect x="0.5" y="0.5" width="11.5" height="11.5" fill="#f2f0f2" stroke="#2a2829"/><path d="M2.5 10 L10 2.5" stroke="#b52a45" stroke-width="2"/></svg>
<div class="t" data-w="75" id="t33" style="left:881.5px;top:130px;font-size:10px;line-height:11px;color:#e0dde0;transform:scaleX(0.9375);transform-origin:0 0;border-bottom:1px solid currentColor;line-height:11px"><svg class="g" viewBox="0 0 10 10"><path d="M1.6 2.2 H8.1 M1.7 5.6 H8.3 M1.9 8.2 H8.5 M8.8 3.7 V6.2 M5.0 2.2 V8.2 M1.3 3.7 V8.2" stroke-width="1.1"/></svg><svg class="g" viewBox="0 0 10 10"><path d="M1.0 0.9 H8.0 M2.1 3.6 H8.6 M1.9 6.6 H8.0 M2.0 8.9 H8.4 M1.3 2.4 V6.9" stroke-width="1.1"/></svg><svg class="g" viewBox="0 0 10 10"><path d="M2.1 1.6 H9.1 M1.8 3.6 H8.0 M0.9 8.2 H9.1 M5.0 1.6 V8.2 M5.0 3.6 L0.6 9.6 M5.4 3.6 L9.5 9.5" stroke-width="1.1"/></svg><svg class="g" viewBox="0 0 10 10"><path d="M2.2 0.8 V9.4 M0.5 3.2 H3.8 M0.6 7.2 L3.6 5.8 M5.3 1.6 H8.4 M4.9 6.6 H8.5 M6.2 8.9 H8.4 M5.3 3.1 V8.9" stroke-width="1.1"/></svg><svg class="g" viewBox="0 0 10 10"><rect x="4" y="3" width="1.4" height="1.4"/><rect x="4" y="7.2" width="1.4" height="1.4"/></svg><svg class="g" viewBox="0 0 10 10"><path d="M2.2 0.8 V9.4 M0.5 3.2 H3.8 M0.6 7.2 L3.6 5.8 M5.0 0.9 H9.0 M5.9 6.6 H8.0 M5.4 8.2 H9.2 M8.8 0.9 V6.2 M5.3 0.9 V8.2 M7.0 6.6 L4.6 9.6 M7.4 6.6 L9.5 9.5" stroke-width="1.1"/></svg><svg class="g" viewBox="0 0 10 10"><path d="M2.1 1.6 H9.1 M2.0 3.6 H8.4 M2.1 8.2 H8.1 M5.0 1.6 V8.2 M1.3 1.6 V8.2" stroke-width="1.1"/></svg><svg class="g" viewBox="0 0 10 10"><path d="M2.2 0.8 V9.4 M0.5 3.2 H3.8 M0.6 7.2 L3.6 5.8 M4.8 1.6 H9.0 M4.9 6.6 H8.4 M6.0 8.9 H8.0 M7.0 1.6 V8.9 M7.0 6.6 L4.6 9.6 M7.4 6.6 L9.5 9.5" stroke-width="1.1"/></svg></div>
<div class="t" data-w="75" id="t34" style="left:881.5px;top:169px;font-size:10px;line-height:11px;color:#e0dde0;transform:scaleX(0.9375);transform-origin:0 0;border-bottom:1px solid currentColor;line-height:11px"><svg class="g" viewBox="0 0 10 10"><path d="M1.6 2.2 H8.1 M1.7 5.6 H8.3 M1.9 8.2 H8.5 M8.8 3.7 V6.2 M5.0 2.2 V8.2 M1.3 3.7 V8.2" stroke-width="1.1"/></svg><svg class="g" viewBox="0 0 10 10"><path d="M1.0 0.9 H8.0 M2.1 3.6 H8.6 M1.9 6.6 H8.0 M2.0 8.9 H8.4 M1.3 2.4 V6.9" stroke-width="1.1"/></svg><svg class="g" viewBox="0 0 10 10"><path d="M2.1 1.6 H9.1 M1.8 3.6 H8.0 M0.9 8.2 H9.1 M5.0 1.6 V8.2 M5.0 3.6 L0.6 9.6 M5.4 3.6 L9.5 9.5" stroke-width="1.1"/></svg><svg class="g" viewBox="0 0 10 10"><path d="M2.2 0.8 V9.4 M0.5 3.2 H3.8 M0.6 7.2 L3.6 5.8 M5.3 1.6 H8.4 M4.9 6.6 H8.5 M6.2 8.9 H8.4 M5.3 3.1 V8.9" stroke-width="1.1"/></svg><svg class="g" viewBox="0 0 10 10"><rect x="4" y="3" width="1.4" height="1.4"/><rect x="4" y="7.2" width="1.4" height="1.4"/></svg><svg class="g" viewBox="0 0 10 10"><path d="M2.2 0.8 V9.4 M0.5 3.2 H3.8 M0.6 7.2 L3.6 5.8 M5.0 0.9 H9.0 M5.9 6.6 H8.0 M5.4 8.2 H9.2 M8.8 0.9 V6.2 M5.3 0.9 V8.2 M7.0 6.6 L4.6 9.6 M7.4 6.6 L9.5 9.5" stroke-width="1.1"/></svg><svg class="g" viewBox="0 0 10 10"><path d="M2.1 1.6 H9.1 M2.0 3.6 H8.4 M2.1 8.2 H8.1 M5.0 1.6 V8.2 M1.3 1.6 V8.2" stroke-width="1.1"/></svg><svg class="g" viewBox="0 0 10 10"><path d="M2.2 0.8 V9.4 M0.5 3.2 H3.8 M0.6 7.2 L3.6 5.8 M4.8 1.6 H9.0 M4.9 6.6 H8.4 M6.0 8.9 H8.0 M7.0 1.6 V8.9 M7.0 6.6 L4.6 9.6 M7.4 6.6 L9.5 9.5" stroke-width="1.1"/></svg></div>
<svg class="a" style="left:828px;top:190px;" width="11" height="11" viewBox="0 0 11 11"><rect x="1" y="1" width="9" height="9" stroke="#d6d3d5" stroke-width="1.5" fill="none"/></svg>
<svg class="a" style="left:848px;top:190px;" width="11" height="11" viewBox="0 0 11 11"><rect x="1" y="1" width="9" height="9" stroke="#d6d3d5" stroke-width="1.2" fill="none"/><rect x="3" y="3" width="5" height="5" fill="#8f8c8e"/></svg>
<div class="t" style="left:869px;top:188px;font-size:12px;line-height:13px;color:#d6d3d5;font-family:"Liberation Serif",serif"><i>fx</i>.</div>
<svg class="a" style="left:928px;top:190px;" width="11" height="11" viewBox="0 0 11 11"><circle cx="5.5" cy="5.5" r="4.3" stroke="#6e6b6d" stroke-width="1.2" fill="none"/><path d="M2.5 2.5 L8.5 8.5" stroke="#6e6b6d" stroke-width="1.2"/></svg>
<svg class="a" style="left:949px;top:189px;" width="10" height="12" viewBox="0 0 10 12"><rect x="1" y="1" width="8" height="10" fill="#6e6b6d"/><path d="M1 4 H9 M1 7 H9" stroke="#534e53" stroke-width="0.8"/></svg>
<svg class="a" style="left:969px;top:189px;" width="10" height="12" viewBox="0 0 10 12"><path d="M1 3 H9 M3 3 V1.5 H7 V3 M2 3 V11 H8 V3" stroke="#6e6b6d" stroke-width="1.2" fill="none"/></svg>
<div class="a" style="left:820px;top:202px;width:180px;height:4px;background:#3b383b;"></div>
<div class="a" style="left:820px;top:206px;width:180px;height:21px;background:#464246;"></div>
<div class="a" style="left:881.5px;top:207px;width:1px;height:20px;background:#3c393b;"></div>
<div class="t" data-w="47" id="t36" style="left:826px;top:210.5px;font-size:10.5px;line-height:11.5px;color:#a6a3a5;transform:scaleX(0.8952);transform-origin:0 0;"><svg class="g" viewBox="0 0 10 10"><path d="M1.3 0.9 H8.1 M1.5 4.6 H8.7 M1.8 8.2 H9.3 M8.8 2.4 V8.2 M5.0 2.4 V8.2" stroke-width="1.1"/></svg><svg class="g" viewBox="0 0 10 10"><path d="M0.9 2.2 H8.1 M1.1 3.6 H8.3 M1.7 8.2 H9.0 M5.0 2.2 V8.2 M8.8 2.2 V6.2" stroke-width="1.1"/></svg><svg class="g" viewBox="0 0 10 10"><path d="M2.2 0.8 V9.4 M0.5 3.2 H3.8 M5.2 1.6 H8.1 M5.4 4.6 H8.4 M6.1 8.9 H8.2 M5.3 1.6 V8.9 M7.0 1.6 V6.9 M7.0 4.6 L4.6 9.6 M7.4 4.6 L9.5 9.5" stroke-width="1.1"/></svg><svg class="g" viewBox="0 0 10 10"><path d="M2.2 0.8 V9.4 M0.5 3.2 H3.8 M0.6 7.2 L3.6 5.8 M4.9 2.2 H8.0 M5.3 6.6 H8.5 M6.0 8.2 H8.9 M5.3 2.2 V8.2 M7.0 2.2 V6.2" stroke-width="1.1"/></svg><svg class="g" viewBox="0 0 10 10"><path d="M1.5 1.6 H8.2 M1.1 6.6 H9.2 M2.1 8.9 H9.2 M5.0 3.1 V6.9 M8.8 1.6 V8.9 M1.3 1.6 V6.9" stroke-width="1.1"/></svg></div>
<div class="a" style="left:881.5px;top:206px;width:36.5px;height:21px;background:#534e53;"></div>
<div class="t" data-w="28" id="t37" style="left:884px;top:210.5px;font-size:10.5px;line-height:11.5px;color:#efecee;transform:scaleX(0.9333);transform-origin:0 0;">c <svg class="g" viewBox="0 0 10 10"><path d="M1.5 2.2 H8.7 M1.1 4.6 H8.6 M1.8 8.2 H8.8 M5.0 3.7 V6.2" stroke-width="1.1"/></svg><svg class="g" viewBox="0 0 10 10"><path d="M2.2 0.8 V9.4 M0.5 3.2 H3.8 M0.6 7.2 L3.6 5.8 M5.8 0.9 H8.2 M5.7 4.6 H9.1 M5.8 5.6 H8.1 M5.9 8.2 H9.2 M8.8 0.9 V8.2 M7.0 0.9 V8.2 M7.0 5.6 L4.6 9.6 M7.4 5.6 L9.5 9.5" stroke-width="1.1"/></svg></div>
<svg class="a" style="left:986px;top:212.5px;" width="9" height="8" viewBox="0 0 9 8"><rect x="0" y="0" width="9" height="8" fill="#a9a6a8"/><path d="M0 2.7 H9 M0 5.3 H9" stroke="#464246" stroke-width="0.8"/></svg>
<div class="t" data-w="43" id="t38" style="left:824px;top:233px;font-size:10px;line-height:11px;color:#c8c5c7;transform:scaleX(0.8600);transform-origin:0 0;"><svg class="g" viewBox="0 0 10 10"><path d="M1.5 2.2 H8.7 M1.1 4.6 H8.6 M1.8 8.2 H8.8 M5.0 3.7 V6.2" stroke-width="1.1"/></svg><svg class="g" viewBox="0 0 10 10"><path d="M2.2 0.8 V9.4 M0.5 3.2 H3.8 M0.6 7.2 L3.6 5.8 M5.8 0.9 H8.2 M5.7 4.6 H9.1 M5.8 5.6 H8.1 M5.9 8.2 H9.2 M8.8 0.9 V8.2 M7.0 0.9 V8.2 M7.0 5.6 L4.6 9.6 M7.4 5.6 L9.5 9.5" stroke-width="1.1"/></svg><svg class="g" viewBox="0 0 10 10"><path d="M1.5 2.2 H8.7 M1.1 4.6 H8.6 M1.8 8.2 H8.8 M5.0 3.7 V6.2" stroke-width="1.1"/></svg><svg class="g" viewBox="0 0 10 10"><path d="M2.2 0.8 V9.4 M0.5 3.2 H3.8 M0.6 7.2 L3.6 5.8 M5.5 2.2 H9.1 M4.8 6.6 H8.4 M5.2 8.2 H8.1 M7.0 2.2 V6.2 M8.8 2.2 V8.2" stroke-width="1.1"/></svg><svg class="g" viewBox="0 0 10 10"><rect x="4" y="3" width="1.4" height="1.4"/><rect x="4" y="7.2" width="1.4" height="1.4"/></svg></div>
<svg class="a" style="left:824.7px;top:248.5px;" width="16" height="16" viewBox="0 0 16 16"><path d="M1 0 V16" stroke="#d6d3d5" stroke-width="1.3"/><rect x="2.5" y="3" width="6" height="4" fill="#d6d3d5"/><rect x="2.5" y="9" width="12" height="4" fill="#d6d3d5"/></svg>
<svg class="a" style="left:852.5px;top:248.5px;" width="16" height="16" viewBox="0 0 16 16"><path d="M8 0 V16" stroke="#d6d3d5" stroke-width="1.3"/><rect x="5" y="3" width="6" height="4" fill="#d6d3d5"/><rect x="2" y="9" width="12" height="4" fill="#d6d3d5"/></svg>
<svg class="a" style="left:882.4px;top:248.5px;" width="16" height="16" viewBox="0 0 16 16"><path d="M15 0 V16" stroke="#d6d3d5" stroke-width="1.3"/><rect x="7.5" y="3" width="6" height="4" fill="#d6d3d5"/><rect x="1.5" y="9" width="12" height="4" fill="#d6d3d5"/></svg>
<svg class="a" style="left:921.2px;top:248.5px;" width="16" height="16" viewBox="0 0 16 16"><path d="M0 1 H16" stroke="#d6d3d5" stroke-width="1.3"/><rect x="3" y="2.5" width="4" height="12" fill="#d6d3d5"/><rect x="9" y="2.5" width="4" height="6" fill="#d6d3d5"/></svg>
<svg class="a" style="left:948.9px;top:248.5px;" width="16" height="16" viewBox="0 0 16 16"><path d="M0 8 H16" stroke="#d6d3d5" stroke-width="1.3"/><rect x="3" y="2" width="4" height="12" fill="#d6d3d5"/><rect x="9" y="5" width="4" height="6" fill="#d6d3d5"/></svg>
<svg class="a" style="left:977.7px;top:248.5px;" width="16" height="16" viewBox="0 0 16 16"><path d="M0 15 H16" stroke="#d6d3d5" stroke-width="1.3"/><rect x="3" y="1.5" width="4" height="12" fill="#d6d3d5"/><rect x="9" y="7.5" width="4" height="6" fill="#d6d3d5"/></svg>
<div class="a" style="left:824px;top:271px;width:172px;height:1px;background:#5a575a;"></div>
<div class="t" data-w="43" id="t39" style="left:824px;top:277px;font-size:10px;line-height:11px;color:#c8c5c7;transform:scaleX(0.8600);transform-origin:0 0;"><svg class="g" viewBox="0 0 10 10"><path d="M1.3 1.6 H8.1 M1.3 6.6 H9.0 M1.7 8.9 H9.2 M8.8 3.1 V8.9 M5.0 1.6 V6.9" stroke-width="1.1"/></svg><svg class="g" viewBox="0 0 10 10"><path d="M1.2 1.6 H9.2 M1.0 6.6 H8.0 M1.9 8.9 H8.4 M5.0 1.6 V8.9 M5.0 6.6 L0.6 9.6 M5.4 6.6 L9.5 9.5" stroke-width="1.1"/></svg><svg class="g" viewBox="0 0 10 10"><path d="M1.5 2.2 H8.7 M1.1 4.6 H8.6 M1.8 8.2 H8.8 M5.0 3.7 V6.2" stroke-width="1.1"/></svg><svg class="g" viewBox="0 0 10 10"><path d="M2.2 0.8 V9.4 M0.5 3.2 H3.8 M0.6 7.2 L3.6 5.8 M5.5 2.2 H9.1 M4.8 6.6 H8.4 M5.2 8.2 H8.1 M7.0 2.2 V6.2 M8.8 2.2 V8.2" stroke-width="1.1"/></svg><svg class="g" viewBox="0 0 10 10"><rect x="4" y="3" width="1.4" height="1.4"/><rect x="4" y="7.2" width="1.4" height="1.4"/></svg></div>
<svg class="a" style="left:824.7px;top:294px;" width="16" height="16" viewBox="0 0 16 16"><path d="M1 2 H15 M1 11 H15" stroke="#d6d3d5" stroke-width="1.2"/><rect x="4" y="3" width="8" height="3.5" fill="#d6d3d5"/><rect x="3" y="12" width="10" height="4" fill="#d6d3d5"/></svg>
<svg class="a" style="left:852.5px;top:294px;" width="16" height="16" viewBox="0 0 16 16"><path d="M1 4 H15 M1 12 H15" stroke="#d6d3d5" stroke-width="1.2"/><rect x="4" y="5" width="8" height="3.5" fill="#d6d3d5"/><rect x="3" y="10" width="10" height="4" fill="#d6d3d5"/></svg>
<svg class="a" style="left:882.4px;top:294px;" width="16" height="16" viewBox="0 0 16 16"><path d="M1 2 H15 M1 11 H15" stroke="#d6d3d5" stroke-width="1.2"/><rect x="4" y="0" width="8" height="3.5" fill="#d6d3d5"/><rect x="3" y="8" width="10" height="4" fill="#d6d3d5"/></svg>
<svg class="a" style="left:921.2px;top:294px;" width="16" height="16" viewBox="0 0 16 16"><path d="M2 0 V16 M11 0 V16" stroke="#d6d3d5" stroke-width="1.2"/><rect x="3" y="3" width="4" height="10" fill="#d6d3d5"/><rect x="12" y="5" width="3.5" height="7" fill="#d6d3d5"/></svg>
<svg class="a" style="left:948.9px;top:294px;" width="16" height="16" viewBox="0 0 16 16"><path d="M4 0 V16 M12 0 V16" stroke="#d6d3d5" stroke-width="1.2"/><rect x="3" y="3" width="4" height="10" fill="#d6d3d5"/><rect x="12" y="5" width="3.5" height="7" fill="#d6d3d5"/></svg>
<svg class="a" style="left:977.7px;top:294px;" width="16" height="16" viewBox="0 0 16 16"><path d="M2 0 V16 M11 0 V16" stroke="#d6d3d5" stroke-width="1.2"/><rect x="3" y="3" width="4" height="10" fill="#d6d3d5"/><rect x="12" y="5" width="3.5" height="7" fill="#d6d3d5"/></svg>
<div class="a" style="left:820px;top:315px;width:180px;height:3px;background:#3b383b;"></div>
<div class="a" style="left:820px;top:318px;width:180px;height:20px;background:#464246;"></div>
<div class="a" style="left:820px;top:318px;width:30px;height:20px;background:#534e53;"></div>
<div class="t" data-w="18" id="t40" style="left:827px;top:322.0px;font-size:10.5px;line-height:11.5px;color:#efecee;transform:scaleX(0.8571);transform-origin:0 0;"><svg class="g" viewBox="0 0 10 10"><path d="M1.1 1.6 H8.1 M1.7 6.6 H8.3 M1.2 8.9 H8.1 M5.0 3.1 V8.9 M1.3 1.6 V6.9 M8.8 3.1 V6.9" stroke-width="1.1"/></svg><svg class="g" viewBox="0 0 10 10"><path d="M2.2 0.8 V9.4 M0.5 3.2 H3.8 M0.6 7.2 L3.6 5.8 M5.6 0.9 H8.6 M5.9 3.6 H9.2 M5.5 5.6 H8.2 M6.1 8.9 H8.1 M5.3 0.9 V8.9 M7.0 2.4 V6.9 M7.0 5.6 L4.6 9.6 M7.4 5.6 L9.5 9.5" stroke-width="1.1"/></svg></div>
<div class="a" style="left:884px;top:319px;width:1px;height:19px;background:#3c393b;"></div>
<div class="t" data-w="19" id="t41" style="left:858px;top:322.0px;font-size:10.5px;line-height:11.5px;color:#a6a3a5;transform:scaleX(0.9048);transform-origin:0 0;"><svg class="g" viewBox="0 0 10 10"><path d="M1.1 2.2 H8.8 M1.2 5.6 H8.7 M1.3 8.2 H8.4 M8.8 2.2 V8.2" stroke-width="1.1"/></svg><svg class="g" viewBox="0 0 10 10"><path d="M2.2 0.8 V9.4 M0.5 3.2 H3.8 M0.6 7.2 L3.6 5.8 M5.8 0.9 H7.9 M5.2 3.6 H8.6 M5.7 4.6 H8.7 M4.9 8.9 H9.0 M7.0 0.9 V6.9 M8.8 2.4 V8.9 M5.3 2.4 V8.9 M7.0 4.6 L4.6 9.6 M7.4 4.6 L9.5 9.5" stroke-width="1.1"/></svg></div>
<div class="a" style="left:917px;top:319px;width:1px;height:19px;background:#3c393b;"></div>
<div class="t" data-w="19" id="t42" style="left:891px;top:322.0px;font-size:10.5px;line-height:11.5px;color:#a6a3a5;transform:scaleX(0.9048);transform-origin:0 0;"><svg class="g" viewBox="0 0 10 10"><path d="M1.7 1.6 H9.3 M0.9 3.6 H8.8 M1.6 8.9 H9.3 M5.0 3.1 V6.9 M1.3 1.6 V6.9" stroke-width="1.1"/></svg><svg class="g" viewBox="0 0 10 10"><path d="M2.2 0.8 V9.4 M0.5 3.2 H3.8 M0.6 7.2 L3.6 5.8 M5.9 0.9 H8.5 M5.7 6.6 H8.4 M4.8 8.2 H8.8 M7.0 0.9 V8.2" stroke-width="1.1"/></svg></div>
<div class="a" style="left:968px;top:319px;width:1px;height:19px;background:#3c393b;"></div>
<div class="t" data-w="38" id="t43" style="left:923px;top:322.0px;font-size:10.5px;line-height:11.5px;color:#a6a3a5;transform:scaleX(0.9048);transform-origin:0 0;"><svg class="g" viewBox="0 0 10 10"><path d="M0.9 0.9 H8.4 M1.8 3.6 H8.9 M2.1 8.9 H8.4 M1.3 0.9 V8.9 M5.0 3.6 L0.6 9.6 M5.4 3.6 L9.5 9.5" stroke-width="1.1"/></svg><svg class="g" viewBox="0 0 10 10"><path d="M2.2 0.8 V9.4 M0.5 3.2 H3.8 M6.1 1.6 H8.8 M4.9 4.6 H9.3 M5.2 6.6 H8.8 M5.6 8.2 H9.1 M8.8 3.1 V8.2 M7.0 6.6 L4.6 9.6 M7.4 6.6 L9.5 9.5" stroke-width="1.1"/></svg><svg class="g" viewBox="0 0 10 10"><path d="M2.2 0.8 V9.4 M0.5 3.2 H3.8 M0.6 7.2 L3.6 5.8 M5.2 2.2 H8.4 M6.2 4.6 H8.6 M5.6 8.9 H8.4 M8.8 3.7 V8.9 M5.3 3.7 V6.9 M7.0 4.6 L4.6 9.6 M7.4 4.6 L9.5 9.5" stroke-width="1.1"/></svg><svg class="g" viewBox="0 0 10 10"><path d="M1.9 1.6 H8.0 M1.6 3.6 H8.5 M1.2 6.6 H8.4 M0.8 8.2 H8.3 M8.8 1.6 V8.2 M5.0 1.6 V8.2 M1.3 1.6 V8.2" stroke-width="1.1"/></svg></div>
<svg class="a" style="left:986px;top:324.0px;" width="9" height="8" viewBox="0 0 9 8"><rect x="0" y="0" width="9" height="8" fill="#a9a6a8"/><path d="M0 2.7 H9 M0 5.3 H9" stroke="#464246" stroke-width="0.8"/></svg>
<svg class="a" style="left:823px;top:343px" width="24" height="24" viewBox="0 0 24 24">
<rect x="9" y="9" width="14.5" height="14.5" fill="#f2f0f2"/><rect x="12.5" y="12.5" width="7.5" height="7.5" fill="#3d3b3c"/>
<path d="M9 23.5 L23.5 9" stroke="#c8363c" stroke-width="1.3"/>
<rect x="0.3" y="0.3" width="14.5" height="14.5" fill="#f6f4f6"/><path d="M0.3 14.8 L14.8 0.3" stroke="#c8363c" stroke-width="1.3"/>
</svg>
<svg class="a" style="left:961px;top:344px;" width="12" height="16" viewBox="0 0 12 16"><path d="M1 2 H11 M1 6 H11 M1 10 H11 M1 14 H11" stroke="#d6d3d5" stroke-width="1.6"/></svg>
<div class="a" style="left:978px;top:344px;width:17px;height:17px;background:#343233;"></div>
<svg class="a" style="left:980px;top:346px;" width="13" height="13" viewBox="0 0 13 13"><rect x="0" y="0" width="3.5" height="3.5" fill="#e0dde0"/><rect x="0" y="5" width="3.5" height="3.5" fill="#e0dde0"/><rect x="0" y="10" width="3.5" height="3.5" fill="#e0dde0"/><rect x="5" y="0" width="3.5" height="3.5" fill="#e0dde0"/><rect x="5" y="5" width="3.5" height="3.5" fill="#e0dde0"/><rect x="5" y="10" width="3.5" height="3.5" fill="#e0dde0"/><rect x="10" y="0" width="3.5" height="3.5" fill="#e0dde0"/><rect x="10" y="5" width="3.5" height="3.5" fill="#e0dde0"/><rect x="10" y="10" width="3.5" height="3.5" fill="#e0dde0"/></svg>
<svg class="a" style="left:824px;top:371px;" width="10" height="10" viewBox="0 0 10 10"><rect x="0" y="0" width="10" height="10" fill="#f4f2f4"/><path d="M0.5 9.5 L9.5 0.5" stroke="#c8363c" stroke-width="1.3"/></svg>
<svg class="a" style="left:835px;top:371px;" width="10" height="10" viewBox="0 0 10 10"><rect x="0" y="0" width="10" height="10" fill="#e8e6e8"/><circle cx="3" cy="3" r="1.6" stroke="#555" stroke-width="0.6" fill="none"/><circle cx="7" cy="3" r="1.6" stroke="#555" stroke-width="0.6" fill="none"/><circle cx="3" cy="7" r="1.6" stroke="#555" stroke-width="0.6" fill="none"/><circle cx="7" cy="7" r="1.6" stroke="#555" stroke-width="0.6" fill="none"/></svg>
<div class="a" style="left:846px;top:371px;width:9px;height:10px;background:#ffffff;"></div>
<div class="a" style="left:856px;top:371px;width:10px;height:10px;background:#000000;"></div>
<div class="a" style="left:867px;top:371px;width:10px;height:10px;background:#ff0000;"></div>
<div class="a" style="left:878px;top:371px;width:10px;height:10px;background:#ffff00;"></div>
<div class="a" style="left:889px;top:371px;width:10px;height:10px;background:#00ff00;"></div>
<div class="a" style="left:900px;top:371px;width:10px;height:10px;background:#00ffff;"></div>
<div class="a" style="left:911px;top:371px;width:10px;height:10px;background:#0000ff;"></div>
<div class="a" style="left:922px;top:371px;width:9px;height:10px;background:#ff00ff;"></div>
<div class="a" style="left:932px;top:371px;width:10px;height:10px;background:#ed1c24;"></div>
<div class="a" style="left:943px;top:371px;width:10px;height:10px;background:#ee1d23;"></div>
<div class="a" style="left:954px;top:371px;width:10px;height:10px;background:#f26522;"></div>
<div class="a" style="left:965px;top:371px;width:10px;height:10px;background:#f7941d;"></div>
<div class="a" style="left:824px;top:382px;width:10px;height:10px;background:#fbb040;"></div>
<div class="a" style="left:835px;top:382px;width:10px;height:10px;background:#fff200;"></div>
<div class="a" style="left:846px;top:382px;width:9px;height:10px;background:#d7df23;"></div>
<div class="a" style="left:856px;top:382px;width:10px;height:10px;background:#8dc63f;"></div>
<div class="a" style="left:867px;top:382px;width:10px;height:10px;background:#39b54a;"></div>
<div class="a" style="left:878px;top:382px;width:10px;height:10px;background:#009444;"></div>
<div class="a" style="left:889px;top:382px;width:10px;height:10px;background:#006838;"></div>
<div class="a" style="left:900px;top:382px;width:10px;height:10px;background:#2bb673;"></div>
<div class="a" style="left:911px;top:382px;width:10px;height:10px;background:#00a79d;"></div>
<div class="a" style="left:922px;top:382px;width:9px;height:10px;background:#27aae1;"></div>
<div class="a" style="left:932px;top:382px;width:10px;height:10px;background:#1c75bc;"></div>
<div class="a" style="left:943px;top:382px;width:10px;height:10px;background:#2b3990;"></div>
<div class="a" style="left:954px;top:382px;width:10px;height:10px;background:#262262;"></div>
<div class="a" style="left:965px;top:382px;width:10px;height:10px;background:#662d91;"></div>
<div class="a" style="left:824px;top:393px;width:10px;height:10px;background:#92278f;"></div>
<div class="a" style="left:835px;top:393px;width:10px;height:10px;background:#9e1f63;"></div>
<div class="a" style="left:846px;top:393px;width:9px;height:10px;background:#da1c5c;"></div>
<div class="a" style="left:856px;top:393px;width:10px;height:10px;background:#ee2a7b;"></div>
<div class="a" style="left:867px;top:393px;width:10px;height:10px;background:#c2b59b;"></div>
<div class="a" style="left:878px;top:393px;width:10px;height:10px;background:#998675;"></div>
<div class="a" style="left:889px;top:393px;width:10px;height:10px;background:#736357;"></div>
<div class="a" style="left:900px;top:393px;width:10px;height:10px;background:#534741;"></div>
<div class="a" style="left:911px;top:393px;width:10px;height:10px;background:#c69c6d;"></div>
<div class="a" style="left:922px;top:393px;width:9px;height:10px;background:#a67c52;"></div>
<div class="a" style="left:932px;top:393px;width:10px;height:10px;background:#8c6239;"></div>
<div class="a" style="left:943px;top:393px;width:10px;height:10px;background:#754c24;"></div>
<div class="a" style="left:954px;top:393px;width:10px;height:10px;background:#603913;"></div>
<div class="a" style="left:965px;top:393px;width:10px;height:10px;background:#3c2415;"></div>
<div class="a" style="left:824px;top:404px;width:10px;height:10.5px;background:linear-gradient(90deg,#fff,#000)"></div>
<div class="a" style="left:835px;top:404px;width:10px;height:10.5px;background:linear-gradient(90deg,#f7b21a,#f05a22)"></div>
<div class="a" style="left:846px;top:404px;width:10px;height:10.5px;background:linear-gradient(90deg,#5fd0ef,#f0fbff)"></div>
<svg class="a" style="left:856px;top:404px;" width="10" height="10.5" viewBox="0 0 10 10.5"><rect width="10" height="10.5" fill="#3c6fa8"/><path d="M0 3 C3 1 5 6 10 2 M0 8 C4 5 6 10 10 7" stroke="#c9e3f5" stroke-width="1.2" fill="none"/></svg>
<svg class="a" style="left:823.9px;top:416.8px;" width="11" height="10" viewBox="0 0 11 10"><path d="M0.5 2.5 H4 L5 3.5 H10.5 V9.5 H0.5 Z" fill="#c8c5c7"/></svg>
<div class="a" style="left:835px;top:417px;width:10px;height:10px;background:#5bc5d2;"></div>
<div class="a" style="left:846px;top:417px;width:9px;height:10px;background:#8a8fd8;"></div>
<div class="a" style="left:856px;top:417px;width:10px;height:10px;background:#c39fd8;"></div>
<svg class="a" style="left:823.9px;top:429.4px;" width="11" height="10" viewBox="0 0 11 10"><path d="M0.5 2.5 H4 L5 3.5 H10.5 V9.5 H0.5 Z" fill="#c8c5c7"/></svg>
<div class="a" style="left:835px;top:429px;width:10px;height:10px;background:#000000;"></div>
<div class="a" style="left:846px;top:429px;width:9px;height:10px;background:#1e1c1d;"></div>
<div class="a" style="left:856px;top:429px;width:10px;height:10px;background:#333132;"></div>
<div class="a" style="left:878px;top:429px;width:10px;height:10px;background:#5e5c5d;"></div>
<div class="a" style="left:889px;top:429px;width:10px;height:10px;background:#737172;"></div>
<div class="a" style="left:900px;top:429px;width:10px;height:10px;background:#8a8889;"></div>
<div class="a" style="left:911px;top:429px;width:10px;height:10px;background:#a3a1a2;"></div>
<div class="a" style="left:922px;top:429px;width:9px;height:10px;background:#bdbbbc;"></div>
<div class="a" style="left:932px;top:429px;width:10px;height:10px;background:#d6d4d5;"></div>
<div class="a" style="left:943px;top:429px;width:10px;height:10px;background:#edebec;"></div>
<svg class="a" style="left:826px;top:433px;" width="50" height="14" viewBox="0 0 50 14"><path d="M2 13 C3 8 8 8 10 10 C13 5 20 6 22 9 C25 6 32 7 34 10 C38 8 44 9 46 13 Z" fill="#6f6c6e"/></svg>
<div class="a" style="left:978px;top:368px;width:17px;height:140px;background:#4f4b4f;"></div>
<div class="a" style="left:822px;top:368px;width:172px;height:127px;background:transparent;border:1px solid #5a575a;border-radius:2px"></div>
<div class="a" style="left:987px;top:435px;width:32px;height:31px;border-radius:50%;background:radial-gradient(circle at 40% 40%,#5ed45e,#2aa52a);border:1.5px solid #b8e8b8"></div>
<div class="t" style="left:991px;top:445px;font-size:9px;line-height:10px;color:#ffffff;">73</div>
<svg class="a" style="left:950px;top:498px;" width="10" height="10" viewBox="0 0 10 10"><rect x="1" y="1" width="8" height="8" fill="#6b686a"/><path d="M1 4 H9 M1 6.5 H9" stroke="#534e53" stroke-width="0.7"/></svg>
<svg class="a" style="left:969px;top:497px;" width="10" height="11" viewBox="0 0 10 11"><path d="M1 3 H9 M3 3 V1.5 H7 V3 M2 3 V10 H8 V3" stroke="#6b686a" stroke-width="1.2" fill="none"/></svg>
<div class="a" style="left:820px;top:511.5px;width:180px;height:24.5px;background:#464246;"></div>
<div class="a" style="left:853px;top:512.5px;width:1px;height:23.5px;background:#3c393b;"></div>
<div class="t" data-w="19" id="t45" style="left:826px;top:517.75px;font-size:10.5px;line-height:11.5px;color:#a6a3a5;transform:scaleX(0.9048);transform-origin:0 0;"><svg class="g" viewBox="0 0 10 10"><path d="M2.2 0.8 V9.4 M0.5 3.2 H3.8 M5.7 0.9 H9.3 M5.8 6.6 H8.1 M5.5 8.9 H8.4 M5.3 0.9 V6.9 M7.0 6.6 L4.6 9.6 M7.4 6.6 L9.5 9.5" stroke-width="1.1"/></svg><svg class="g" viewBox="0 0 10 10"><path d="M1.1 1.6 H9.3 M1.2 3.6 H8.6 M1.7 8.2 H8.0 M5.0 1.6 V8.2 M5.0 3.6 L0.6 9.6 M5.4 3.6 L9.5 9.5" stroke-width="1.1"/></svg></div>
<div class="a" style="left:853px;top:511.5px;width:59.39999999999998px;height:24.5px;background:#534e53;"></div>
<div class="t" data-w="47" id="t46" style="left:860px;top:517.75px;font-size:10.5px;line-height:11.5px;color:#efecee;transform:scaleX(0.9216);transform-origin:0 0;">OpenType</div>
<svg class="a" style="left:986px;top:519.75px;" width="9" height="8" viewBox="0 0 9 8"><rect x="0" y="0" width="9" height="8" fill="#a9a6a8"/><path d="M0 2.7 H9 M0 5.3 H9" stroke="#464246" stroke-width="0.8"/></svg>
<div class="a" style="left:820px;top:511px;width:180px;height:1px;background:#3b383b;"></div>
<svg class="a" style="left:776px;top:512px;" width="9" height="7" viewBox="0 0 9 7"><path d="M1 3 L3.5 5.5 L8 1" stroke="#7a9a6a" stroke-width="1.3" fill="none"/></svg>
<svg class="a" style="left:760px;top:498px" width="190" height="24" viewBox="760 498 190 24">
<path d="M768.5 509.5 C773 511 773.5 516.5 768 518 C770.5 515.5 770.5 512 768.5 509.5 Z" fill="#f4f2f0"/>
<path d="M794.5 518 C798 517.5 802 516.5 804.5 515.5 C802 518 798 519 794.5 518 Z" fill="#f4f2f0"/>
<path d="M807 517.5 C810 517 812 515 813 512.5 C813 516 810.5 518.5 807 517.5 Z" fill="#f4f2f0"/>
<path d="M819 512.5 C818.5 508 824 506 826.5 508.5 L827 513 L824.5 513 L824.5 511 C823 510 821.5 511 822.5 513 Z" fill="#f4f2f0"/>
<path d="M851 513 C855 511.5 856.5 508 858 507 C860 508.5 861 511.5 864.5 513 C861.5 513 859.5 512 858 510.5 C856.5 512 854.5 513 851 513 Z" fill="#f4f2f0"/>
</svg>
<div class="a" style="left:879px;top:500px;width:70px;height:13.5px;overflow:hidden"><div class="t" style="left:1px;top:2px;font-size:13px;line-height:13px;font-weight:bold;color:#f4f2f0;letter-spacing:-0.3px">zc.&nbsp;Jn&nbsp;II</div></div>
<svg class="a" style="left:0;top:0" width="1000" height="541"><path d="M21.30 163.60 L24.44 167.97 L30.43 168.66 L64.83 175.21 L125.24 187.23 L143.96 190.58 L144.09 189.99 L125.67 185.27 L65.72 171.11 L31.71 162.79 L25.97 160.93 Z" fill="#e8403a"/><path d="M20.00 376.50 L26.97 378.78 L27.73 377.24 L79.49 368.49 L178.16 351.62 L206.58 345.76 L206.45 344.97 L177.66 348.66 L78.87 364.75 L27.07 373.29 L25.85 372.08 Z" fill="#e8403a"/></svg>
<div class="a" style="left:0px;top:536px;width:1000px;height:5px;background:#0e0c0e;"></div>
<div class="a" style="left:31px;top:536px;width:224px;height:5px;background:#262426;"></div>
<div class="a" style="left:417.5px;top:536px;width:31px;height:5px;background:#373537;"></div>
</body></html>
